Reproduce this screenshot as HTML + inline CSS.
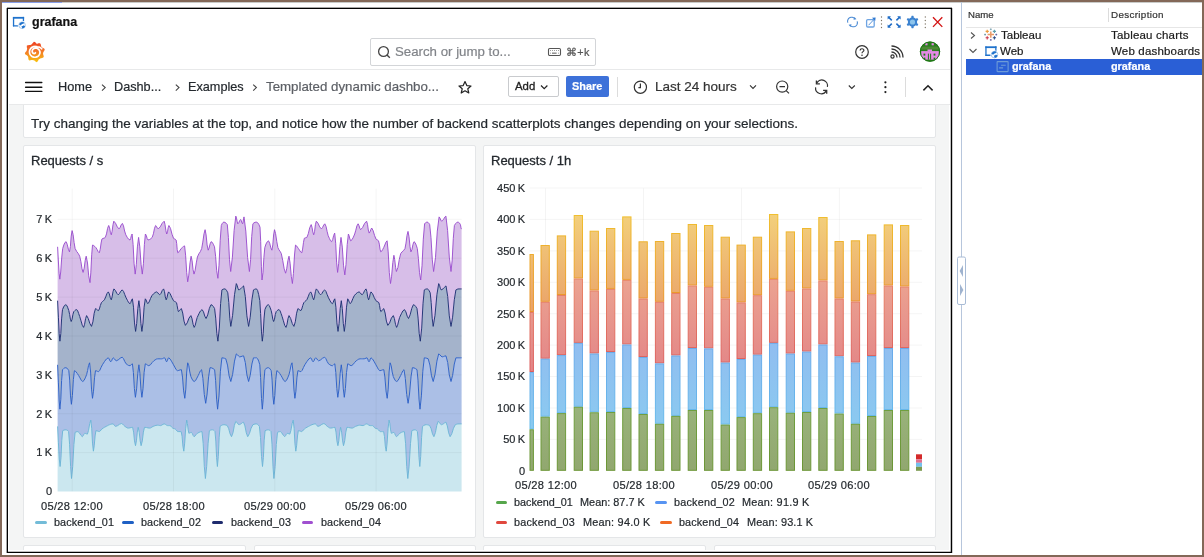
<!DOCTYPE html>
<html><head><meta charset="utf-8"><style>
html,body{margin:0;padding:0;width:1204px;height:557px;overflow:hidden;background:#fff;position:relative}
.t{position:absolute;white-space:nowrap;line-height:1;font-family:"Liberation Sans", sans-serif;will-change:transform;-webkit-text-stroke:0.2px currentColor}
div{font-family:"Liberation Sans", sans-serif}
</style></head><body>
<div style="position:absolute;left:0px;top:0px;width:1204px;height:557px;box-sizing:border-box;border:2px solid #836858;border-bottom-width:2px"></div><div style="position:absolute;left:2px;top:2px;width:1200px;height:1px;background:#c9cbc9"></div><div style="position:absolute;left:2px;top:2px;width:60px;height:1px;background:#8aa0e8"></div><div style="position:absolute;left:7px;top:8px;width:945px;height:545px;box-sizing:border-box;border:1px solid #000"></div><div style="position:absolute;left:6px;top:8px;width:1px;height:545px;background:rgba(0,0,0,0.35)"></div><div style="position:absolute;left:7px;top:7px;width:945px;height:1px;background:rgba(0,0,0,0.35)"></div><div style="position:absolute;left:952px;top:8px;width:1px;height:545px;background:rgba(0,0,0,0.2)"></div><div style="position:absolute;left:950px;top:9px;width:1px;height:543px;background:rgba(0,0,0,0.25)"></div><div style="position:absolute;left:8px;top:551px;width:943px;height:1px;background:rgba(0,0,0,0.25)"></div><svg style="position:absolute;left:12px;top:16px" width="16" height="14" viewBox="0 0 16 14">
<g fill="#1f72cc">
<rect x="0.9" y="0.9" width="11.2" height="1.8"/>
<rect x="0.9" y="0.9" width="1.3" height="9.6" rx="0.4"/>
<rect x="0.9" y="9.2" width="6.2" height="1.3" rx="0.4"/>
<rect x="10.8" y="0.9" width="1.3" height="4.6"/>
</g>
<circle cx="10.1" cy="9.2" r="4.2" fill="#fff"/>
<circle cx="10.1" cy="9.2" r="3.3" fill="none" stroke="#9cc2ea" stroke-width="0.9"/>
<path d="M7.1 8.6 A3.3 3.3 0 0 1 12.3 6.6 L11.2 7.9 Q9.8 7.6 8.8 9.4 Z" fill="#1f72cc"/>
<path d="M9.4 10.1 Q10.8 10.4 11.6 9.2 L13.2 10.3 A3.3 3.3 0 0 1 10.4 12.5 Z" fill="#1f72cc"/>
</svg><div class="t" style="left:32.20px;top:15.92px;font-size:12.5px;font-weight:700;color:#111;">grafana</div><svg style="position:absolute;left:846px;top:15px" width="100" height="15" viewBox="0 0 100 15"><path d="M1.84 7.57 L1.66 6.89 L1.60 6.20 L1.66 5.51 L1.84 4.83 L2.14 4.20 L2.54 3.63 L3.03 3.14 L3.60 2.74 L4.23 2.44 L4.91 2.26 L5.60 2.20 L6.29 2.26 L6.97 2.44 L7.60 2.74 L8.17 3.14 L8.66 3.63" fill="none" stroke="#4a8ad4" stroke-width="1.1"/><path d="M11.16 6.43 L11.34 7.11 L11.40 7.80 L11.34 8.49 L11.16 9.17 L10.86 9.80 L10.46 10.37 L9.97 10.86 L9.40 11.26 L8.77 11.56 L8.09 11.74 L7.40 11.80 L6.71 11.74 L6.03 11.56 L5.40 11.26 L4.83 10.86 L4.34 10.37" fill="none" stroke="#4a8ad4" stroke-width="1.1"/><path d="M8.46 2.03 L10.46 4.23 L7.46 4.83 Z" fill="#4a8ad4"/><path d="M4.54 11.97 L2.54 9.77 L5.54 9.17 Z" fill="#4a8ad4"/><rect x="20.6" y="4.6" width="7.6" height="7.4" rx="1.2" fill="none" stroke="#6ea4e2" stroke-width="1.3"/><path d="M22.6 10.2 L28.2 4.2" stroke="#5b96dc" stroke-width="1"/><path d="M29.6 2.4 L29.2 6.0 L26.0 2.8 Z" fill="#2f78d0"/><circle cx="35.5" cy="2.0" r="0.65" fill="#7d7464"/><circle cx="79.3" cy="2.0" r="0.65" fill="#7d7464"/><circle cx="35.5" cy="5.5" r="0.65" fill="#7d7464"/><circle cx="79.3" cy="5.5" r="0.65" fill="#7d7464"/><circle cx="35.5" cy="9.0" r="0.65" fill="#7d7464"/><circle cx="79.3" cy="9.0" r="0.65" fill="#7d7464"/><circle cx="35.5" cy="12.5" r="0.65" fill="#7d7464"/><circle cx="79.3" cy="12.5" r="0.65" fill="#7d7464"/><path d="M42.80 2.40 L45.80 5.40" stroke="#1f6cc6" stroke-width="1.5"/><path d="M41.60 1.20 L45.00 1.20 L41.60 4.60 Z" fill="#1f6cc6"/><path d="M53.40 2.40 L50.40 5.40" stroke="#1f6cc6" stroke-width="1.5"/><path d="M54.60 1.20 L51.20 1.20 L54.60 4.60 Z" fill="#1f6cc6"/><path d="M42.80 11.60 L45.80 8.60" stroke="#1f6cc6" stroke-width="1.5"/><path d="M41.60 12.80 L45.00 12.80 L41.60 9.40 Z" fill="#1f6cc6"/><path d="M53.40 11.60 L50.40 8.60" stroke="#1f6cc6" stroke-width="1.5"/><path d="M54.60 12.80 L51.20 12.80 L54.60 9.40 Z" fill="#1f6cc6"/><path d="M71.10 7.00 L71.08 7.40 L71.03 7.80 L70.94 8.19 L72.33 9.12 L72.12 9.62 L71.87 10.10 L71.58 10.56 L71.25 10.99 L69.75 10.25 L69.46 10.52 L69.14 10.77 L68.80 10.98 L68.44 11.17 L68.07 11.32 L67.69 11.44 L67.58 13.11 L67.04 13.18 L66.50 13.20 L65.96 13.18 L65.42 13.11 L65.31 11.44 L64.93 11.32 L64.56 11.17 L64.20 10.98 L63.86 10.77 L63.54 10.52 L63.25 10.25 L61.75 10.99 L61.42 10.56 L61.13 10.10 L60.88 9.62 L60.67 9.12 L62.06 8.19 L61.97 7.80 L61.92 7.40 L61.90 7.00 L61.92 6.60 L61.97 6.20 L62.06 5.81 L60.67 4.88 L60.88 4.38 L61.13 3.90 L61.42 3.44 L61.75 3.01 L63.25 3.75 L63.54 3.48 L63.86 3.23 L64.20 3.02 L64.56 2.83 L64.93 2.68 L65.31 2.56 L65.42 0.89 L65.96 0.82 L66.50 0.80 L67.04 0.82 L67.58 0.89 L67.69 2.56 L68.07 2.68 L68.44 2.83 L68.80 3.02 L69.14 3.23 L69.46 3.48 L69.75 3.75 L71.25 3.01 L71.58 3.44 L71.87 3.90 L72.12 4.38 L72.33 4.88 L70.94 5.81 L71.03 6.20 L71.08 6.60Z" fill="#3b82d0"/><circle cx="66.5" cy="7.0" r="2.6" fill="#8cc4ec"/><path d="M87 2.3 L96.3 11.9 M96.3 2.3 L87 11.9" stroke="#d31515" stroke-width="1.35"/></svg><svg style="position:absolute;left:22px;top:39px" width="25" height="25" viewBox="0 0 25 25">
<defs><linearGradient id="lg" gradientUnits="userSpaceOnUse" x1="0" y1="2" x2="0" y2="23"><stop offset="0" stop-color="#ee3a22"/><stop offset="0.5" stop-color="#f37a28"/><stop offset="1" stop-color="#f9c20e"/></linearGradient></defs>
<path fill="url(#lg)" d="M21.45 13.00 L22.10 12.09 L22.65 11.06 L22.63 10.05 L21.65 9.37 L20.64 8.86 L19.80 8.39 L19.32 7.73 L19.03 6.87 L18.84 5.76 L18.49 4.64 L17.64 4.14 L16.48 4.36 L15.41 4.72 L14.56 4.65 L13.80 3.83 L12.90 3.09 L11.90 2.85 L11.05 3.68 L10.34 4.57 L9.72 5.33 L8.99 5.68 L8.29 6.10 L7.21 6.07 L6.07 6.17 L4.90 6.43 L4.79 7.58 L4.91 8.73 L5.17 9.80 L4.96 10.59 L4.76 11.38 L4.35 12.16 L3.61 13.00 L2.96 13.98 L2.97 14.97 L3.88 15.74 L4.83 16.34 L5.58 16.91 L6.00 17.61 L6.26 18.45 L6.33 19.57 L6.57 20.72 L7.28 21.42 L8.46 21.31 L9.56 21.07 L10.49 20.94 L11.28 21.14 L12.08 21.31 L12.90 22.04 L13.85 22.69 L14.92 23.17 L15.71 22.26 L16.34 21.30 L16.81 20.32 L17.51 19.90 L18.17 19.42 L19.03 19.13 L20.14 18.94 L21.26 18.59 L21.76 17.74 L21.54 16.58 L21.18 15.51 L21.04 14.62 L21.16 13.81Z"/>
<path d="M19.79 9.79 L18.94 9.08 L18.03 8.54 L17.10 8.17 L16.17 7.97 L15.27 7.92 L14.53 7.66 L13.77 7.50 L13.00 7.44 L12.22 7.50 L11.47 7.66 L10.74 7.92 L10.07 8.28 L9.45 8.73 L8.90 9.27 L8.43 9.87 L8.05 10.53 L7.76 11.23 L7.58 11.97 L7.50 12.72 L7.53 13.47 L7.66 14.21 L7.89 14.92 L8.22 15.59 L8.64 16.21 L9.14 16.76 L9.70 17.24 L10.33 17.63 L11.01 17.93 L11.71 18.13 L12.44 18.24 L13.17 18.23 L13.90 18.13 L14.60 17.93 L15.26 17.63 L15.87 17.25 L16.43 16.78 L16.91 16.25 L17.31 15.65 L17.62 15.00 L17.84 14.32 L17.97 13.62 L17.92 12.91 L17.75 12.23 L17.49 11.60 L17.15 11.02 L16.75 10.50 L16.28 10.06 L15.77 9.70 L15.22 9.43 L14.65 9.24 L14.08 9.13 L13.52 9.11 L12.97 9.17 L12.45 9.31 L11.97 9.51 L11.53 9.78 L11.15 10.09 L10.83 10.45 L10.58 10.83 L10.39 11.24 L10.26 11.66 L10.20 12.07 L10.21 12.48 L10.27 12.86 L10.38 13.22 L10.54 13.54 L10.74 13.83 L10.98 14.07 L11.23 14.26 L11.50 14.40 L11.77 14.50 L12.04 14.55 L12.31 14.55 L12.55 14.51 L12.77 14.44 L12.97 14.33 L13.13 14.20 L13.26 14.06 L13.36 13.90 L13.42 13.74" fill="none" stroke="#fff" stroke-width="1.7" stroke-linecap="round"/>
</svg><div style="position:absolute;left:370px;top:38px;width:226px;height:28px;box-sizing:border-box;border:1px solid #d3d5d8;border-radius:2px;background:#fff"></div><svg style="position:absolute;left:377px;top:45px" width="15" height="14" viewBox="0 0 15 14">
<circle cx="6.5" cy="6.5" r="4.9" fill="none" stroke="#444" stroke-width="1.3"/><path d="M10 10 L12.8 12.8" stroke="#444" stroke-width="1.4"/></svg><div class="t" style="left:395.00px;top:45.28px;font-size:13.25px;font-weight:400;color:#818489;">Search or jump to...</div><svg style="position:absolute;left:547px;top:47px" width="16" height="10" viewBox="0 0 16 10">
<rect x="1.5" y="1.5" width="12" height="7" rx="1.2" fill="none" stroke="#555" stroke-width="1.1"/>
<g fill="#888"><rect x="3" y="3" width="0.9" height="0.9"/><rect x="5" y="3" width="0.9" height="0.9"/><rect x="7" y="3" width="0.9" height="0.9"/><rect x="9" y="3" width="0.9" height="0.9"/><rect x="11" y="3" width="0.9" height="0.9"/><rect x="3" y="5.7" width="0.9" height="0.9"/><rect x="11" y="5.7" width="0.9" height="0.9"/><rect x="5" y="5.6" width="4.6" height="1.1" fill="#666"/></g></svg><div class="t" style="left:565.60px;top:47.36px;font-size:10.8px;font-weight:400;color:#555;letter-spacing:0.3px">&#8984;+k</div><svg style="position:absolute;left:854px;top:44px" width="16" height="16" viewBox="0 0 16 16">
<circle cx="8" cy="8" r="6.3" fill="none" stroke="#333" stroke-width="1.2"/>
<path d="M6.1 6.4 C6.1 4.2 9.9 4.2 9.9 6.3 C9.9 7.6 8 7.7 8 9.2" fill="none" stroke="#333" stroke-width="1.2"/>
<circle cx="8" cy="11.2" r="0.8" fill="#333"/></svg><svg style="position:absolute;left:889px;top:45px" width="15" height="15" viewBox="0 0 15 15">
<circle cx="3.5" cy="11.5" r="1.6" fill="none" stroke="#333" stroke-width="1.2"/>
<path d="M2.5 7 A5.5 5.5 0 0 1 8 12.5 M2.5 4 A8.5 8.5 0 0 1 11 12.5 M2.5 1 A11.5 11.5 0 0 1 14 12.5" fill="none" stroke="#333" stroke-width="1.3"/></svg><svg style="position:absolute;left:919px;top:41px" width="22" height="22" viewBox="0 0 22 22">
<defs><clipPath id="av"><circle cx="11" cy="10.6" r="10.1"/></clipPath></defs>
<g clip-path="url(#av)">
<rect width="22" height="22" fill="#2c7d20"/>
<rect x="2" y="5.6" width="18" height="2.9" fill="#4d8a35"/>
<rect x="6.3" y="2.2" width="2.2" height="2.1" fill="#e68ae6"/><rect x="12.6" y="2.2" width="2.2" height="2.1" fill="#e68ae6"/>
<rect x="8.5" y="8.5" width="4.5" height="2" fill="#e68ae6"/>
<rect x="2.2" y="10.1" width="17.6" height="8.5" fill="#e68ae6"/>
<rect x="4.5" y="12.6" width="1.8" height="2" fill="#1f7a18"/><rect x="14.6" y="12.6" width="1.8" height="2" fill="#1f7a18"/>
<rect x="8.9" y="12.6" width="1" height="6" fill="#1f7a18"/><rect x="11.1" y="12.6" width="1" height="6" fill="#1f7a18"/>
<rect x="4.7" y="16.6" width="1.6" height="2" fill="#1f7a18"/><rect x="14.6" y="16.6" width="1.6" height="2" fill="#1f7a18"/>
</g><circle cx="11" cy="10.6" r="9.7" fill="none" stroke="#177510" stroke-width="0.9"/></svg><div style="position:absolute;left:9px;top:69px;width:941px;height:1px;background:#e8e9ea"></div><svg style="position:absolute;left:24px;top:80px" width="20" height="14" viewBox="0 0 20 14">
<g stroke="#111" stroke-width="1.4" stroke-linecap="round"><path d="M1.6 2.5 H17.8 M1.6 7.3 H17.8 M1.6 11.4 H17.8"/></g></svg><div class="t" style="left:58.20px;top:80.71px;font-size:12.75px;font-weight:400;color:#24292e;">Home</div><div class="t" style="left:114.30px;top:80.75px;font-size:12.7px;font-weight:400;color:#24292e;">Dashb...</div><div class="t" style="left:188.00px;top:80.75px;font-size:12.7px;font-weight:400;color:#24292e;">Examples</div><div class="t" style="left:266.20px;top:80.24px;font-size:13.3px;font-weight:400;color:#5d6066;">Templated dynamic dashbo...</div><div style="position:absolute;left:508px;top:76px;width:51px;height:21px;box-sizing:border-box;border:1px solid #c9cbce;border-radius:2px;background:#fff"></div><svg style="position:absolute;left:0;top:0" width="960" height="110"><path d="M102 84.6 L105.2 87.6 L102 90.6" fill="none" stroke="#444" stroke-width="1.1"/><path d="M175.8 84.6 L179.0 87.6 L175.8 90.6" fill="none" stroke="#444" stroke-width="1.1"/><path d="M253.2 84.6 L256.4 87.6 L253.2 90.6" fill="none" stroke="#444" stroke-width="1.1"/><path d="M465 81.6 L466.8 85.6 L471 86 L467.8 88.8 L468.8 93 L465 90.8 L461.2 93 L462.2 88.8 L459 86 L463.2 85.6 Z" fill="none" stroke="#222" stroke-width="1.2" stroke-linejoin="round"/><path d="M541 85.5 L544.2 88.6 L547.4 85.5" fill="none" stroke="#222" stroke-width="1.2"/><circle cx="640.4" cy="87.2" r="6.1" fill="none" stroke="#333" stroke-width="1.2"/><path d="M640.4 83.6 V87.6 H638.4" fill="none" stroke="#333" stroke-width="1.2"/><path d="M750 85.4 L753 88.4 L756 85.4" fill="none" stroke="#333" stroke-width="1.1"/><circle cx="782.2" cy="86.6" r="5.6" fill="none" stroke="#333" stroke-width="1.2"/><path d="M779.5 86.6 H785 M786.4 90.8 L789 93.4" fill="none" stroke="#333" stroke-width="1.2"/><path d="M816.8 83.0 A5.7 5.7 0 0 1 827.4 86.9 M815.6 87.4 A5.7 5.7 0 0 0 826.2 90.9" fill="none" stroke="#333" stroke-width="1.2"/><path d="M816.4 80.4 V83.9 H819.9" fill="none" stroke="#333" stroke-width="1.3"/><path d="M823.1 90.3 H826.7 V93.8" fill="none" stroke="#333" stroke-width="1.3"/><path d="M848.8 85.5 L851.8 88.5 L854.8 85.5" fill="none" stroke="#333" stroke-width="1.1"/><circle cx="885.4" cy="82.3" r="1.1" fill="#222"/><circle cx="885.4" cy="87.2" r="1.1" fill="#222"/><circle cx="885.4" cy="92.1" r="1.1" fill="#222"/><path d="M923.4 90.4 L928 85.8 L932.6 90.4" fill="none" stroke="#222" stroke-width="1.5"/></svg><div class="t" style="left:515.20px;top:80.85px;font-size:11.4px;font-weight:500;color:#222;-webkit-text-stroke:0.3px #222">Add</div><div style="position:absolute;left:566px;top:76px;width:43px;height:21px;border-radius:2px;background:#3d71d9"></div><div class="t" style="left:572.20px;top:81.27px;font-size:10.9px;font-weight:700;color:#fff;">Share</div><div style="position:absolute;left:617px;top:77px;width:1px;height:20px;background:#dcdcdc"></div><div style="position:absolute;left:905px;top:77px;width:1px;height:20px;background:#dcdcdc"></div><div class="t" style="left:655.30px;top:80.07px;font-size:13.5px;font-weight:400;color:#333;">Last 24 hours</div><div style="position:absolute;left:9px;top:104px;width:941px;height:1px;background:#e8e9ea"></div><div style="position:absolute;left:9px;top:105px;width:940px;height:445px;background:#f4f5f5;overflow:hidden"><div style="position:absolute;left:14px;top:-7px;width:913px;height:40px;box-sizing:border-box;border:1px solid #e4e6e8;border-radius:2px;background:#fff"></div><div class="t" style="left:22.20px;top:12.09px;font-size:13.48px;font-weight:400;color:#24292e;">Try changing the variables at the top, and notice how the number of backend scatterplots changes depending on your selections.</div><div style="position:absolute;left:14px;top:40px;width:453px;height:393px;box-sizing:border-box;border:1px solid #e4e6e8;border-radius:2px;background:#fff"></div><div style="position:absolute;left:474px;top:40px;width:453px;height:393px;box-sizing:border-box;border:1px solid #e4e6e8;border-radius:2px;background:#fff"></div><div style="position:absolute;left:14px;top:440px;width:223px;height:40px;box-sizing:border-box;border:1px solid #e4e6e8;border-radius:2px;background:#fff"></div><div style="position:absolute;left:245px;top:440px;width:222px;height:40px;box-sizing:border-box;border:1px solid #e4e6e8;border-radius:2px;background:#fff"></div><div style="position:absolute;left:474px;top:440px;width:223px;height:40px;box-sizing:border-box;border:1px solid #e4e6e8;border-radius:2px;background:#fff"></div><div style="position:absolute;left:705px;top:440px;width:222px;height:40px;box-sizing:border-box;border:1px solid #e4e6e8;border-radius:2px;background:#fff"></div></div><div class="t" style="left:31.20px;top:153.50px;font-size:13.0px;font-weight:500;color:#24292e;-webkit-text-stroke:0.3px #24292e">Requests / s</div><div class="t" style="left:491.20px;top:153.50px;font-size:13.0px;font-weight:500;color:#24292e;-webkit-text-stroke:0.3px #24292e">Requests / 1h</div><svg style="position:absolute;left:0;top:0" width="960" height="557"><defs><linearGradient id="gO" gradientUnits="userSpaceOnUse" x1="0" y1="188" x2="0" y2="330"><stop offset="0" stop-color="#f5dc80"/><stop offset="1" stop-color="#e89a66"/></linearGradient><linearGradient id="gOs" gradientUnits="userSpaceOnUse" x1="0" y1="188" x2="0" y2="330"><stop offset="0" stop-color="#f2cc30"/><stop offset="1" stop-color="#e8882a"/></linearGradient><linearGradient id="gR" gradientUnits="userSpaceOnUse" x1="0" y1="270" x2="0" y2="380"><stop offset="0" stop-color="#eca692"/><stop offset="1" stop-color="#e28286"/></linearGradient><linearGradient id="gRs" gradientUnits="userSpaceOnUse" x1="0" y1="270" x2="0" y2="380"><stop offset="0" stop-color="#ea8a68"/><stop offset="1" stop-color="#da5a5e"/></linearGradient><linearGradient id="gB" gradientUnits="userSpaceOnUse" x1="0" y1="340" x2="0" y2="430"><stop offset="0" stop-color="#91bdf0"/><stop offset="1" stop-color="#8acaf0"/></linearGradient><linearGradient id="gBs" gradientUnits="userSpaceOnUse" x1="0" y1="340" x2="0" y2="430"><stop offset="0" stop-color="#6aa8ea"/><stop offset="1" stop-color="#68bcea"/></linearGradient><linearGradient id="gG" gradientUnits="userSpaceOnUse" x1="0" y1="405" x2="0" y2="471"><stop offset="0" stop-color="#99b37b"/><stop offset="1" stop-color="#91a76f"/></linearGradient><linearGradient id="gGs" gradientUnits="userSpaceOnUse" x1="0" y1="405" x2="0" y2="471"><stop offset="0" stop-color="#70a040"/><stop offset="1" stop-color="#6c9636"/></linearGradient></defs><path d="M57.6,426.4 58.4,442.8 59.3,459.1 60.1,466.5 61.0,457.3 61.8,440.2 62.7,430.7 63.8,430.2 64.9,429.9 66.1,429.8 66.9,430.1 67.8,430.6 68.6,431.6 69.6,444.3 70.6,466.6 71.5,478.5 72.7,466.7 73.9,444.6 75.1,432.4 76.1,431.9 77.1,431.7 78.0,431.6 79.4,432.9 80.9,435.3 82.3,436.7 83.1,435.8 84.0,434.1 84.8,433.3 85.7,433.5 86.6,433.9 87.4,434.1 88.5,430.5 89.7,423.8 90.8,420.1 91.7,428.2 92.5,443.1 93.4,451.2 94.2,445.9 95.1,436.0 95.9,430.7 97.1,430.9 98.2,431.3 99.3,431.6 100.2,431.0 101.1,429.9 101.9,429.0 103.3,428.0 104.7,427.2 106.2,426.4 107.3,425.8 108.4,425.2 109.6,424.7 110.7,424.3 111.9,424.0 113.0,423.9 113.8,424.5 114.7,425.8 115.5,426.4 117.5,425.7 119.5,424.3 121.5,423.5 122.7,424.1 123.8,425.4 124.9,426.4 126.1,427.2 127.2,427.9 128.3,428.1 129.8,427.9 131.2,427.5 132.6,427.3 133.6,432.1 134.5,440.9 135.5,445.7 136.4,440.9 137.3,432.1 138.2,427.3 139.2,432.1 140.2,440.9 141.1,445.7 142.3,440.9 143.4,432.1 144.5,427.3 146.3,427.5 148.0,427.9 149.7,428.1 150.8,427.8 151.9,427.1 153.1,426.4 154.5,425.9 155.9,425.4 157.3,425.2 158.5,425.3 159.6,425.5 160.7,425.6 161.9,425.1 163.0,424.3 164.2,423.9 165.3,424.3 166.4,425.1 167.6,425.6 168.4,425.6 169.3,425.6 170.1,425.6 171.0,426.2 171.8,427.3 172.7,428.1 173.5,428.5 174.4,428.7 175.2,429.0 176.1,429.8 177.0,431.0 177.8,431.6 178.9,431.6 180.1,431.6 181.2,431.6 182.1,436.6 182.9,446.1 183.8,451.2 184.7,443.1 185.7,428.2 186.7,420.1 187.4,423.5 188.2,429.9 188.9,433.3 189.7,433.0 190.6,432.6 191.4,432.4 192.3,433.5 193.2,435.6 194.0,436.7 195.1,435.9 196.3,434.4 197.4,433.3 199.0,432.4 200.5,431.8 202.0,431.6 203.2,443.7 204.3,466.3 205.4,478.5 206.7,466.2 208.1,443.4 209.4,430.7 210.5,430.2 211.6,429.9 212.8,429.8 213.5,430.1 214.2,430.6 215.0,431.6 215.8,441.1 216.6,457.7 217.4,466.5 218.3,456.3 219.2,437.2 220.1,426.4 221.4,425.5 222.6,424.9 223.9,424.7 225.0,424.8 226.1,425.1 227.3,425.6 228.7,428.7 230.1,433.9 231.5,436.7 233.0,432.7 234.4,425.3 235.8,421.3 236.8,422.2 237.8,423.8 238.9,424.7 239.5,424.6 240.2,424.3 240.9,423.9 241.8,423.2 242.6,422.5 243.5,422.2 244.9,425.9 246.3,432.9 247.7,436.7 249.4,433.7 251.1,428.2 252.9,424.7 254.0,424.3 255.1,424.0 256.3,423.9 257.3,424.2 258.4,425.1 259.4,426.4 260.5,437.5 261.5,456.5 262.5,466.5 263.4,457.3 264.2,440.2 265.1,430.7 266.2,430.2 267.3,429.9 268.5,429.8 269.3,430.1 270.2,430.6 271.0,431.6 272.0,444.3 273.0,466.6 273.9,478.5 275.1,466.7 276.3,444.6 277.5,432.4 278.5,431.9 279.5,431.7 280.4,431.6 281.8,432.9 283.3,435.3 284.7,436.7 285.5,435.8 286.4,434.1 287.2,433.3 288.1,433.5 289.0,433.9 289.8,434.1 290.9,430.5 292.1,423.8 293.2,420.1 294.1,428.2 294.9,443.1 295.8,451.2 296.6,445.9 297.5,436.0 298.3,430.7 299.5,430.9 300.6,431.3 301.7,431.6 302.6,431.0 303.5,429.9 304.3,429.0 305.7,428.0 307.1,427.2 308.6,426.4 309.7,425.8 310.8,425.2 312.0,424.7 313.1,424.3 314.3,424.0 315.4,423.9 316.2,424.5 317.1,425.8 317.9,426.4 319.9,425.7 321.9,424.3 323.9,423.5 325.1,424.1 326.2,425.4 327.3,426.4 328.5,427.2 329.6,427.9 330.7,428.1 332.2,427.9 333.6,427.5 335.0,427.3 336.0,432.1 336.9,440.9 337.9,445.7 338.8,440.9 339.7,432.1 340.6,427.3 341.6,432.1 342.6,440.9 343.5,445.7 344.7,440.9 345.8,432.1 346.9,427.3 348.7,427.5 350.4,427.9 352.1,428.1 353.2,427.8 354.3,427.1 355.5,426.4 356.9,425.9 358.3,425.4 359.7,425.2 360.9,425.3 362.0,425.5 363.1,425.6 364.3,425.1 365.4,424.3 366.6,423.9 367.7,424.3 368.8,425.1 370.0,425.6 370.8,425.6 371.7,425.6 372.5,425.6 373.4,426.2 374.2,427.3 375.1,428.1 375.9,428.5 376.8,428.7 377.6,429.0 378.5,429.8 379.4,431.0 380.2,431.6 381.3,431.6 382.5,431.6 383.6,431.6 384.5,436.6 385.3,446.1 386.2,451.2 387.1,443.1 388.1,428.2 389.1,420.1 389.8,423.5 390.6,429.9 391.3,433.3 392.1,433.0 393.0,432.6 393.8,432.4 394.7,433.5 395.6,435.6 396.4,436.7 397.5,435.9 398.7,434.4 399.8,433.3 401.4,432.4 402.9,431.8 404.4,431.6 405.6,443.7 406.7,466.3 407.8,478.5 409.1,466.2 410.5,443.4 411.8,430.7 412.9,430.2 414.0,429.9 415.2,429.8 415.9,430.1 416.6,430.6 417.4,431.6 418.2,441.1 419.0,457.7 419.8,466.5 420.7,456.3 421.6,437.2 422.5,426.4 423.8,425.5 425.0,424.9 426.3,424.7 427.4,424.8 428.5,425.1 429.7,425.6 431.1,428.7 432.5,433.9 433.9,436.7 435.4,432.7 436.8,425.3 438.2,421.3 439.2,422.2 440.2,423.8 441.3,424.7 441.9,424.6 442.6,424.3 443.3,423.9 444.2,423.2 445.0,422.5 445.9,422.2 447.3,425.9 448.7,432.9 450.1,436.7 451.8,433.7 453.5,428.2 455.3,424.7 456.4,424.3 457.5,424.0 458.7,423.9 459.6,423.9 460.6,423.9 461.6,423.9 461.6,491.5 57.6,491.5Z" fill="#cbe7ef"/><path d="M57.6,364.8 58.4,382.9 59.2,401.0 59.9,409.2 60.8,399.2 61.6,380.4 62.5,369.7 63.6,368.6 64.7,367.9 65.9,367.7 66.9,368.1 67.8,369.1 68.8,370.7 69.7,380.1 70.5,395.9 71.4,404.3 72.4,395.5 73.4,379.4 74.4,370.7 75.8,371.5 77.3,373.5 78.7,375.6 80.0,377.9 81.3,380.4 82.7,381.5 84.0,380.5 85.3,377.9 86.6,374.6 87.6,370.5 88.6,365.3 89.6,362.8 90.6,372.0 91.5,389.1 92.5,398.3 93.5,391.2 94.5,377.8 95.5,370.7 96.5,370.9 97.5,371.4 98.5,371.7 99.8,370.3 101.1,367.4 102.4,364.8 104.4,361.7 106.4,359.0 108.3,357.8 109.1,358.9 109.9,360.8 110.7,361.8 111.6,360.8 112.4,358.9 113.3,357.8 114.3,358.6 115.2,360.0 116.2,360.8 118.2,359.9 120.2,358.2 122.2,357.2 123.5,358.7 124.8,361.6 126.1,363.8 127.4,364.7 128.7,365.5 130.1,365.7 130.8,365.2 131.6,364.3 132.4,363.8 133.4,372.5 134.4,388.6 135.4,397.3 136.6,388.9 137.8,373.2 138.9,364.8 139.9,373.2 140.9,388.9 141.9,397.3 143.0,388.6 144.1,372.5 145.3,363.8 146.4,364.3 147.6,365.2 148.8,365.7 150.5,364.7 152.1,362.6 153.8,360.8 155.1,359.9 156.4,359.1 157.7,358.8 159.0,358.8 160.3,358.8 161.7,358.8 162.6,358.6 163.6,358.1 164.6,357.8 165.3,358.9 165.9,360.8 166.6,361.8 167.3,360.8 167.9,358.9 168.6,357.8 170.2,359.1 171.9,361.9 173.5,364.8 174.8,367.1 176.1,369.6 177.5,370.7 178.8,370.4 180.1,369.9 181.4,369.7 182.5,377.1 183.6,390.9 184.8,398.3 185.8,389.1 186.7,372.0 187.7,362.8 188.8,365.8 189.8,372.0 190.9,376.6 192.0,379.0 193.1,380.8 194.2,381.5 195.6,380.5 196.9,378.1 198.2,375.6 199.3,373.3 200.4,370.8 201.6,369.7 202.9,378.4 204.3,394.6 205.7,403.3 207.1,394.0 208.6,376.9 210.0,367.7 211.6,367.9 213.1,368.6 214.6,369.7 215.6,380.3 216.6,399.1 217.6,409.2 219.0,395.9 220.4,371.2 221.9,357.8 223.2,358.0 224.5,358.3 225.8,358.8 227.5,365.1 229.1,375.8 230.8,381.5 232.6,374.4 234.5,361.1 236.3,353.9 237.4,354.7 238.6,356.1 239.7,356.9 241.0,356.6 242.3,356.1 243.6,355.9 245.3,362.5 246.9,374.9 248.6,381.5 250.2,375.4 251.9,364.0 253.5,357.8 254.5,357.8 255.5,357.8 256.5,357.8 257.6,358.7 258.7,361.1 259.8,364.8 260.6,377.7 261.5,398.4 262.3,409.2 263.2,399.2 264.0,380.4 264.9,369.7 266.0,368.6 267.1,367.9 268.3,367.7 269.3,368.1 270.2,369.1 271.2,370.7 272.1,380.1 272.9,395.9 273.8,404.3 274.8,395.5 275.8,379.4 276.8,370.7 278.2,371.5 279.7,373.5 281.1,375.6 282.4,377.9 283.7,380.4 285.1,381.5 286.4,380.5 287.7,377.9 289.0,374.6 290.0,370.5 291.0,365.3 292.0,362.8 293.0,372.0 293.9,389.1 294.9,398.3 295.9,391.2 296.9,377.8 297.9,370.7 298.9,370.9 299.9,371.4 300.9,371.7 302.2,370.3 303.5,367.4 304.8,364.8 306.8,361.7 308.8,359.0 310.7,357.8 311.5,358.9 312.3,360.8 313.1,361.8 314.0,360.8 314.8,358.9 315.7,357.8 316.7,358.6 317.6,360.0 318.6,360.8 320.6,359.9 322.6,358.2 324.6,357.2 325.9,358.7 327.2,361.6 328.5,363.8 329.8,364.7 331.1,365.5 332.5,365.7 333.2,365.2 334.0,364.3 334.8,363.8 335.8,372.5 336.8,388.6 337.8,397.3 339.0,388.9 340.2,373.2 341.3,364.8 342.3,373.2 343.3,388.9 344.3,397.3 345.4,388.6 346.5,372.5 347.7,363.8 348.8,364.3 350.0,365.2 351.2,365.7 352.9,364.7 354.5,362.6 356.2,360.8 357.5,359.9 358.8,359.1 360.1,358.8 361.4,358.8 362.7,358.8 364.1,358.8 365.0,358.6 366.0,358.1 367.0,357.8 367.7,358.9 368.3,360.8 369.0,361.8 369.7,360.8 370.3,358.9 371.0,357.8 372.6,359.1 374.3,361.9 375.9,364.8 377.2,367.1 378.5,369.6 379.9,370.7 381.2,370.4 382.5,369.9 383.8,369.7 384.9,377.1 386.0,390.9 387.2,398.3 388.2,389.1 389.1,372.0 390.1,362.8 391.2,365.8 392.2,372.0 393.3,376.6 394.4,379.0 395.5,380.8 396.6,381.5 398.0,380.5 399.3,378.1 400.6,375.6 401.7,373.3 402.8,370.8 404.0,369.7 405.3,378.4 406.7,394.6 408.1,403.3 409.5,394.0 411.0,376.9 412.4,367.7 414.0,367.9 415.5,368.6 417.0,369.7 418.0,380.3 419.0,399.1 420.0,409.2 421.4,395.9 422.8,371.2 424.3,357.8 425.6,358.0 426.9,358.3 428.2,358.8 429.9,365.1 431.5,375.8 433.2,381.5 435.0,374.4 436.9,361.1 438.7,353.9 439.8,354.7 441.0,356.1 442.1,356.9 443.4,356.6 444.7,356.1 446.0,355.9 447.7,362.5 449.3,374.9 451.0,381.5 452.6,375.4 454.3,364.0 455.9,357.8 456.9,357.8 457.9,357.8 458.9,357.8 459.8,357.8 460.7,357.8 461.6,357.8 461.6,423.9 460.6,423.9 459.6,423.9 458.7,423.9 457.5,424.0 456.4,424.3 455.3,424.7 453.5,428.2 451.8,433.7 450.1,436.7 448.7,432.9 447.3,425.9 445.9,422.2 445.0,422.5 444.2,423.2 443.3,423.9 442.6,424.3 441.9,424.6 441.3,424.7 440.2,423.8 439.2,422.2 438.2,421.3 436.8,425.3 435.4,432.7 433.9,436.7 432.5,433.9 431.1,428.7 429.7,425.6 428.5,425.1 427.4,424.8 426.3,424.7 425.0,424.9 423.8,425.5 422.5,426.4 421.6,437.2 420.7,456.3 419.8,466.5 419.0,457.7 418.2,441.1 417.4,431.6 416.6,430.6 415.9,430.1 415.2,429.8 414.0,429.9 412.9,430.2 411.8,430.7 410.5,443.4 409.1,466.2 407.8,478.5 406.7,466.3 405.6,443.7 404.4,431.6 402.9,431.8 401.4,432.4 399.8,433.3 398.7,434.4 397.5,435.9 396.4,436.7 395.6,435.6 394.7,433.5 393.8,432.4 393.0,432.6 392.1,433.0 391.3,433.3 390.6,429.9 389.8,423.5 389.1,420.1 388.1,428.2 387.1,443.1 386.2,451.2 385.3,446.1 384.5,436.6 383.6,431.6 382.5,431.6 381.3,431.6 380.2,431.6 379.4,431.0 378.5,429.8 377.6,429.0 376.8,428.7 375.9,428.5 375.1,428.1 374.2,427.3 373.4,426.2 372.5,425.6 371.7,425.6 370.8,425.6 370.0,425.6 368.8,425.1 367.7,424.3 366.6,423.9 365.4,424.3 364.3,425.1 363.1,425.6 362.0,425.5 360.9,425.3 359.7,425.2 358.3,425.4 356.9,425.9 355.5,426.4 354.3,427.1 353.2,427.8 352.1,428.1 350.4,427.9 348.7,427.5 346.9,427.3 345.8,432.1 344.7,440.9 343.5,445.7 342.6,440.9 341.6,432.1 340.6,427.3 339.7,432.1 338.8,440.9 337.9,445.7 336.9,440.9 336.0,432.1 335.0,427.3 333.6,427.5 332.2,427.9 330.7,428.1 329.6,427.9 328.5,427.2 327.3,426.4 326.2,425.4 325.1,424.1 323.9,423.5 321.9,424.3 319.9,425.7 317.9,426.4 317.1,425.8 316.2,424.5 315.4,423.9 314.3,424.0 313.1,424.3 312.0,424.7 310.8,425.2 309.7,425.8 308.6,426.4 307.1,427.2 305.7,428.0 304.3,429.0 303.5,429.9 302.6,431.0 301.7,431.6 300.6,431.3 299.5,430.9 298.3,430.7 297.5,436.0 296.6,445.9 295.8,451.2 294.9,443.1 294.1,428.2 293.2,420.1 292.1,423.8 290.9,430.5 289.8,434.1 289.0,433.9 288.1,433.5 287.2,433.3 286.4,434.1 285.5,435.8 284.7,436.7 283.3,435.3 281.8,432.9 280.4,431.6 279.5,431.7 278.5,431.9 277.5,432.4 276.3,444.6 275.1,466.7 273.9,478.5 273.0,466.6 272.0,444.3 271.0,431.6 270.2,430.6 269.3,430.1 268.5,429.8 267.3,429.9 266.2,430.2 265.1,430.7 264.2,440.2 263.4,457.3 262.5,466.5 261.5,456.5 260.5,437.5 259.4,426.4 258.4,425.1 257.3,424.2 256.3,423.9 255.1,424.0 254.0,424.3 252.9,424.7 251.1,428.2 249.4,433.7 247.7,436.7 246.3,432.9 244.9,425.9 243.5,422.2 242.6,422.5 241.8,423.2 240.9,423.9 240.2,424.3 239.5,424.6 238.9,424.7 237.8,423.8 236.8,422.2 235.8,421.3 234.4,425.3 233.0,432.7 231.5,436.7 230.1,433.9 228.7,428.7 227.3,425.6 226.1,425.1 225.0,424.8 223.9,424.7 222.6,424.9 221.4,425.5 220.1,426.4 219.2,437.2 218.3,456.3 217.4,466.5 216.6,457.7 215.8,441.1 215.0,431.6 214.2,430.6 213.5,430.1 212.8,429.8 211.6,429.9 210.5,430.2 209.4,430.7 208.1,443.4 206.7,466.2 205.4,478.5 204.3,466.3 203.2,443.7 202.0,431.6 200.5,431.8 199.0,432.4 197.4,433.3 196.3,434.4 195.1,435.9 194.0,436.7 193.2,435.6 192.3,433.5 191.4,432.4 190.6,432.6 189.7,433.0 188.9,433.3 188.2,429.9 187.4,423.5 186.7,420.1 185.7,428.2 184.7,443.1 183.8,451.2 182.9,446.1 182.1,436.6 181.2,431.6 180.1,431.6 178.9,431.6 177.8,431.6 177.0,431.0 176.1,429.8 175.2,429.0 174.4,428.7 173.5,428.5 172.7,428.1 171.8,427.3 171.0,426.2 170.1,425.6 169.3,425.6 168.4,425.6 167.6,425.6 166.4,425.1 165.3,424.3 164.2,423.9 163.0,424.3 161.9,425.1 160.7,425.6 159.6,425.5 158.5,425.3 157.3,425.2 155.9,425.4 154.5,425.9 153.1,426.4 151.9,427.1 150.8,427.8 149.7,428.1 148.0,427.9 146.3,427.5 144.5,427.3 143.4,432.1 142.3,440.9 141.1,445.7 140.2,440.9 139.2,432.1 138.2,427.3 137.3,432.1 136.4,440.9 135.5,445.7 134.5,440.9 133.6,432.1 132.6,427.3 131.2,427.5 129.8,427.9 128.3,428.1 127.2,427.9 126.1,427.2 124.9,426.4 123.8,425.4 122.7,424.1 121.5,423.5 119.5,424.3 117.5,425.7 115.5,426.4 114.7,425.8 113.8,424.5 113.0,423.9 111.9,424.0 110.7,424.3 109.6,424.7 108.4,425.2 107.3,425.8 106.2,426.4 104.7,427.2 103.3,428.0 101.9,429.0 101.1,429.9 100.2,431.0 99.3,431.6 98.2,431.3 97.1,430.9 95.9,430.7 95.1,436.0 94.2,445.9 93.4,451.2 92.5,443.1 91.7,428.2 90.8,420.1 89.7,423.8 88.5,430.5 87.4,434.1 86.6,433.9 85.7,433.5 84.8,433.3 84.0,434.1 83.1,435.8 82.3,436.7 80.9,435.3 79.4,432.9 78.0,431.6 77.1,431.7 76.1,431.9 75.1,432.4 73.9,444.6 72.7,466.7 71.5,478.5 70.6,466.6 69.6,444.3 68.6,431.6 67.8,430.6 66.9,430.1 66.1,429.8 64.9,429.9 63.8,430.2 62.7,430.7 61.8,440.2 61.0,457.3 60.1,466.5 59.3,459.1 58.4,442.8 57.6,426.4Z" fill="#abbfe6"/><path d="M57.6,300.7 58.4,317.2 59.2,333.7 59.9,341.2 60.8,333.6 61.6,318.9 62.5,309.6 63.6,307.0 64.7,305.3 65.9,304.7 66.9,305.6 67.8,307.8 68.8,310.6 69.6,314.4 70.4,319.2 71.2,321.5 72.1,319.1 72.9,314.6 73.8,311.6 74.8,310.6 75.7,309.9 76.7,309.6 77.7,310.9 78.7,313.6 79.7,316.5 81.0,320.8 82.3,325.3 83.6,327.4 84.6,324.3 85.6,318.6 86.6,315.6 88.2,318.4 89.9,323.6 91.5,326.4 92.9,321.8 94.2,313.2 95.5,308.6 96.5,309.2 97.5,310.1 98.5,310.6 99.4,308.9 100.4,305.4 101.4,302.7 102.4,301.6 103.4,300.8 104.4,299.8 105.7,296.9 107.0,293.5 108.3,291.9 109.3,293.9 110.3,297.7 111.3,299.8 112.1,296.9 113.0,291.7 113.9,288.9 115.3,290.4 116.8,293.3 118.2,294.8 119.5,293.5 120.8,291.2 122.2,289.9 123.5,291.4 124.8,294.7 126.1,297.8 127.4,300.3 128.7,302.7 130.1,303.7 130.8,302.4 131.6,300.0 132.4,298.8 133.5,307.2 134.5,322.9 135.6,331.4 136.7,323.4 137.8,308.7 138.9,300.7 139.9,308.7 140.9,323.4 141.9,331.4 143.0,322.9 144.1,307.2 145.3,298.8 146.1,300.0 147.0,302.4 147.8,303.7 149.1,302.0 150.5,298.5 151.8,295.8 153.4,293.9 155.1,292.5 156.7,291.9 157.7,292.6 158.7,294.0 159.7,294.8 161.0,293.3 162.3,290.4 163.6,288.9 164.5,291.7 165.3,296.9 166.2,299.8 167.0,297.7 167.8,293.9 168.6,291.9 170.2,293.8 171.9,297.7 173.5,300.7 174.5,301.4 175.5,301.9 176.5,302.7 177.1,305.4 177.8,309.5 178.4,311.6 179.4,310.8 180.4,309.4 181.4,308.6 182.7,313.0 184.0,321.1 185.4,325.4 187.2,322.9 189.0,318.1 190.9,315.6 192.0,318.6 193.1,324.3 194.2,327.4 195.2,325.3 196.2,321.1 197.2,317.5 198.9,313.8 200.5,310.9 202.1,309.6 203.5,311.9 204.8,316.2 206.1,318.5 207.7,314.9 209.4,308.3 211.0,304.7 212.2,305.2 213.4,306.6 214.6,308.6 215.7,318.1 216.8,333.3 217.9,341.2 219.3,328.1 220.6,303.6 221.9,289.9 222.9,289.3 223.9,289.0 224.9,288.9 225.8,289.4 226.8,290.8 227.8,292.8 228.8,302.6 229.8,318.2 230.8,326.4 232.6,315.3 234.5,294.7 236.3,283.6 237.1,285.2 237.9,288.2 238.7,289.9 239.7,289.5 240.7,288.8 241.6,287.9 242.3,287.2 243.0,286.3 243.6,285.9 245.3,296.4 246.9,315.9 248.6,326.4 250.2,317.2 251.9,299.8 253.5,289.9 254.5,289.4 255.5,289.0 256.5,288.9 257.6,290.5 258.7,294.7 259.8,300.7 260.6,313.5 261.5,331.9 262.3,341.2 263.2,333.6 264.0,318.9 264.9,309.6 266.0,307.0 267.1,305.3 268.3,304.7 269.3,305.6 270.2,307.8 271.2,310.6 272.0,314.4 272.8,319.2 273.6,321.5 274.5,319.1 275.3,314.6 276.2,311.6 277.2,310.6 278.1,309.9 279.1,309.6 280.1,310.9 281.1,313.6 282.1,316.5 283.4,320.8 284.7,325.3 286.0,327.4 287.0,324.3 288.0,318.6 289.0,315.6 290.6,318.4 292.3,323.6 293.9,326.4 295.3,321.8 296.6,313.2 297.9,308.6 298.9,309.2 299.9,310.1 300.9,310.6 301.8,308.9 302.8,305.4 303.8,302.7 304.8,301.6 305.8,300.8 306.8,299.8 308.1,296.9 309.4,293.5 310.7,291.9 311.7,293.9 312.7,297.7 313.7,299.8 314.5,296.9 315.4,291.7 316.3,288.9 317.7,290.4 319.2,293.3 320.6,294.8 321.9,293.5 323.2,291.2 324.6,289.9 325.9,291.4 327.2,294.7 328.5,297.8 329.8,300.3 331.1,302.7 332.5,303.7 333.2,302.4 334.0,300.0 334.8,298.8 335.9,307.2 336.9,322.9 338.0,331.4 339.1,323.4 340.2,308.7 341.3,300.7 342.3,308.7 343.3,323.4 344.3,331.4 345.4,322.9 346.5,307.2 347.7,298.8 348.5,300.0 349.4,302.4 350.2,303.7 351.5,302.0 352.9,298.5 354.2,295.8 355.8,293.9 357.5,292.5 359.1,291.9 360.1,292.6 361.1,294.0 362.1,294.8 363.4,293.3 364.7,290.4 366.0,288.9 366.9,291.7 367.7,296.9 368.6,299.8 369.4,297.7 370.2,293.9 371.0,291.9 372.6,293.8 374.3,297.7 375.9,300.7 376.9,301.4 377.9,301.9 378.9,302.7 379.5,305.4 380.2,309.5 380.8,311.6 381.8,310.8 382.8,309.4 383.8,308.6 385.1,313.0 386.4,321.1 387.8,325.4 389.6,322.9 391.4,318.1 393.3,315.6 394.4,318.6 395.5,324.3 396.6,327.4 397.6,325.3 398.6,321.1 399.6,317.5 401.3,313.8 402.9,310.9 404.5,309.6 405.9,311.9 407.2,316.2 408.5,318.5 410.1,314.9 411.8,308.3 413.4,304.7 414.6,305.2 415.8,306.6 417.0,308.6 418.1,318.1 419.2,333.3 420.3,341.2 421.7,328.1 423.0,303.6 424.3,289.9 425.3,289.3 426.3,289.0 427.3,288.9 428.2,289.4 429.2,290.8 430.2,292.8 431.2,302.6 432.2,318.2 433.2,326.4 435.0,315.3 436.9,294.7 438.7,283.6 439.5,285.2 440.3,288.2 441.1,289.9 442.1,289.5 443.1,288.8 444.0,287.9 444.7,287.2 445.4,286.3 446.0,285.9 447.7,296.4 449.3,315.9 451.0,326.4 452.6,317.2 454.3,299.8 455.9,289.9 456.9,289.4 457.9,289.0 458.9,288.9 459.8,288.9 460.7,288.9 461.6,288.9 461.6,357.8 460.7,357.8 459.8,357.8 458.9,357.8 457.9,357.8 456.9,357.8 455.9,357.8 454.3,364.0 452.6,375.4 451.0,381.5 449.3,374.9 447.7,362.5 446.0,355.9 444.7,356.1 443.4,356.6 442.1,356.9 441.0,356.1 439.8,354.7 438.7,353.9 436.9,361.1 435.0,374.4 433.2,381.5 431.5,375.8 429.9,365.1 428.2,358.8 426.9,358.3 425.6,358.0 424.3,357.8 422.8,371.2 421.4,395.9 420.0,409.2 419.0,399.1 418.0,380.3 417.0,369.7 415.5,368.6 414.0,367.9 412.4,367.7 411.0,376.9 409.5,394.0 408.1,403.3 406.7,394.6 405.3,378.4 404.0,369.7 402.8,370.8 401.7,373.3 400.6,375.6 399.3,378.1 398.0,380.5 396.6,381.5 395.5,380.8 394.4,379.0 393.3,376.6 392.2,372.0 391.2,365.8 390.1,362.8 389.1,372.0 388.2,389.1 387.2,398.3 386.0,390.9 384.9,377.1 383.8,369.7 382.5,369.9 381.2,370.4 379.9,370.7 378.5,369.6 377.2,367.1 375.9,364.8 374.3,361.9 372.6,359.1 371.0,357.8 370.3,358.9 369.7,360.8 369.0,361.8 368.3,360.8 367.7,358.9 367.0,357.8 366.0,358.1 365.0,358.6 364.1,358.8 362.7,358.8 361.4,358.8 360.1,358.8 358.8,359.1 357.5,359.9 356.2,360.8 354.5,362.6 352.9,364.7 351.2,365.7 350.0,365.2 348.8,364.3 347.7,363.8 346.5,372.5 345.4,388.6 344.3,397.3 343.3,388.9 342.3,373.2 341.3,364.8 340.2,373.2 339.0,388.9 337.8,397.3 336.8,388.6 335.8,372.5 334.8,363.8 334.0,364.3 333.2,365.2 332.5,365.7 331.1,365.5 329.8,364.7 328.5,363.8 327.2,361.6 325.9,358.7 324.6,357.2 322.6,358.2 320.6,359.9 318.6,360.8 317.6,360.0 316.7,358.6 315.7,357.8 314.8,358.9 314.0,360.8 313.1,361.8 312.3,360.8 311.5,358.9 310.7,357.8 308.8,359.0 306.8,361.7 304.8,364.8 303.5,367.4 302.2,370.3 300.9,371.7 299.9,371.4 298.9,370.9 297.9,370.7 296.9,377.8 295.9,391.2 294.9,398.3 293.9,389.1 293.0,372.0 292.0,362.8 291.0,365.3 290.0,370.5 289.0,374.6 287.7,377.9 286.4,380.5 285.1,381.5 283.7,380.4 282.4,377.9 281.1,375.6 279.7,373.5 278.2,371.5 276.8,370.7 275.8,379.4 274.8,395.5 273.8,404.3 272.9,395.9 272.1,380.1 271.2,370.7 270.2,369.1 269.3,368.1 268.3,367.7 267.1,367.9 266.0,368.6 264.9,369.7 264.0,380.4 263.2,399.2 262.3,409.2 261.5,398.4 260.6,377.7 259.8,364.8 258.7,361.1 257.6,358.7 256.5,357.8 255.5,357.8 254.5,357.8 253.5,357.8 251.9,364.0 250.2,375.4 248.6,381.5 246.9,374.9 245.3,362.5 243.6,355.9 242.3,356.1 241.0,356.6 239.7,356.9 238.6,356.1 237.4,354.7 236.3,353.9 234.5,361.1 232.6,374.4 230.8,381.5 229.1,375.8 227.5,365.1 225.8,358.8 224.5,358.3 223.2,358.0 221.9,357.8 220.4,371.2 219.0,395.9 217.6,409.2 216.6,399.1 215.6,380.3 214.6,369.7 213.1,368.6 211.6,367.9 210.0,367.7 208.6,376.9 207.1,394.0 205.7,403.3 204.3,394.6 202.9,378.4 201.6,369.7 200.4,370.8 199.3,373.3 198.2,375.6 196.9,378.1 195.6,380.5 194.2,381.5 193.1,380.8 192.0,379.0 190.9,376.6 189.8,372.0 188.8,365.8 187.7,362.8 186.7,372.0 185.8,389.1 184.8,398.3 183.6,390.9 182.5,377.1 181.4,369.7 180.1,369.9 178.8,370.4 177.5,370.7 176.1,369.6 174.8,367.1 173.5,364.8 171.9,361.9 170.2,359.1 168.6,357.8 167.9,358.9 167.3,360.8 166.6,361.8 165.9,360.8 165.3,358.9 164.6,357.8 163.6,358.1 162.6,358.6 161.7,358.8 160.3,358.8 159.0,358.8 157.7,358.8 156.4,359.1 155.1,359.9 153.8,360.8 152.1,362.6 150.5,364.7 148.8,365.7 147.6,365.2 146.4,364.3 145.3,363.8 144.1,372.5 143.0,388.6 141.9,397.3 140.9,388.9 139.9,373.2 138.9,364.8 137.8,373.2 136.6,388.9 135.4,397.3 134.4,388.6 133.4,372.5 132.4,363.8 131.6,364.3 130.8,365.2 130.1,365.7 128.7,365.5 127.4,364.7 126.1,363.8 124.8,361.6 123.5,358.7 122.2,357.2 120.2,358.2 118.2,359.9 116.2,360.8 115.2,360.0 114.3,358.6 113.3,357.8 112.4,358.9 111.6,360.8 110.7,361.8 109.9,360.8 109.1,358.9 108.3,357.8 106.4,359.0 104.4,361.7 102.4,364.8 101.1,367.4 99.8,370.3 98.5,371.7 97.5,371.4 96.5,370.9 95.5,370.7 94.5,377.8 93.5,391.2 92.5,398.3 91.5,389.1 90.6,372.0 89.6,362.8 88.6,365.3 87.6,370.5 86.6,374.6 85.3,377.9 84.0,380.5 82.7,381.5 81.3,380.4 80.0,377.9 78.7,375.6 77.3,373.5 75.8,371.5 74.4,370.7 73.4,379.4 72.4,395.5 71.4,404.3 70.5,395.9 69.7,380.1 68.8,370.7 67.8,369.1 66.9,368.1 65.9,367.7 64.7,367.9 63.6,368.6 62.5,369.7 61.6,380.4 60.8,399.2 59.9,409.2 59.2,401.0 58.4,382.9 57.6,364.8Z" fill="#a4b3cb"/><path d="M57.6,246.8 58.3,260.0 59.1,273.2 59.8,279.2 60.7,272.0 61.7,257.9 62.7,248.5 63.8,245.0 64.9,242.6 66.1,241.7 67.2,244.3 68.4,249.3 69.5,251.9 70.4,246.4 71.2,236.1 72.1,230.6 73.1,234.6 74.1,242.6 75.1,248.5 76.7,251.5 78.2,253.4 79.7,256.2 80.9,261.6 82.0,268.8 83.1,272.4 84.2,268.2 85.2,260.4 86.2,256.2 87.5,263.0 88.7,275.8 90.0,282.6 90.8,272.9 91.7,254.8 92.5,245.1 93.7,245.5 94.8,246.5 95.9,247.6 97.1,249.5 98.2,251.7 99.3,252.8 100.2,249.4 101.1,243.0 101.9,239.1 103.0,238.4 104.2,238.1 105.3,237.4 106.5,233.9 107.6,228.3 108.7,225.5 109.6,227.9 110.4,232.4 111.3,234.8 112.1,231.3 113.0,224.7 113.8,221.2 115.5,223.2 117.3,226.9 119.0,228.9 120.1,227.5 121.2,224.8 122.4,223.4 123.5,225.9 124.6,231.0 125.8,234.8 127.2,237.3 128.6,239.2 130.0,240.0 130.7,238.4 131.4,235.5 132.1,234.0 133.1,244.4 134.1,263.7 135.2,274.1 136.3,264.6 137.4,246.9 138.6,237.4 139.8,246.9 141.1,264.6 142.3,274.1 143.4,263.7 144.4,244.4 145.4,234.0 146.3,235.5 147.1,238.4 148.0,240.0 149.4,239.6 150.8,238.7 152.2,237.4 153.4,233.8 154.5,228.3 155.6,225.5 156.5,226.4 157.3,228.0 158.2,228.9 160.2,226.9 162.2,223.2 164.2,221.2 165.0,224.5 165.9,230.7 166.7,234.0 167.5,231.8 168.2,227.7 168.9,225.5 170.5,228.4 172.0,234.2 173.5,238.3 174.4,238.8 175.2,239.2 176.1,240.0 176.7,243.6 177.2,249.6 177.8,252.8 178.9,251.9 180.1,250.1 181.2,248.5 182.4,247.4 183.5,246.4 184.6,245.9 185.6,255.2 186.7,272.5 187.7,281.8 188.8,275.1 190.0,262.8 191.1,256.2 192.1,260.8 193.0,269.4 194.0,274.1 195.1,270.4 196.3,262.9 197.4,257.0 198.8,253.9 200.3,251.7 201.7,248.5 202.8,242.1 204.0,233.8 205.1,229.7 206.1,235.0 207.1,244.9 208.2,250.2 209.1,248.0 210.1,243.9 211.1,241.7 212.2,242.3 213.3,244.2 214.5,246.8 215.6,256.3 216.7,270.8 217.9,278.3 219.0,265.2 220.2,240.4 221.3,225.5 222.1,223.7 223.0,222.5 223.9,222.1 225.0,222.4 226.1,223.2 227.3,224.6 228.4,237.5 229.5,259.7 230.7,271.5 232.4,257.1 234.1,230.5 235.8,216.1 236.5,218.1 237.2,221.8 237.8,223.8 238.8,222.7 239.7,220.6 240.6,219.5 241.3,220.6 241.9,222.7 242.6,223.8 243.1,222.0 243.5,218.7 244.0,216.9 245.8,231.1 247.6,257.4 249.4,271.5 250.6,259.4 251.7,236.6 252.9,223.8 254.0,222.8 255.1,222.3 256.3,222.1 257.5,222.6 258.8,224.3 260.0,227.2 260.7,241.7 261.4,266.8 262.0,280.0 263.0,272.3 263.9,257.4 264.8,247.6 266.0,244.0 267.3,241.7 268.5,240.8 269.7,243.2 270.8,247.8 271.9,250.2 272.8,244.9 273.6,235.0 274.5,229.7 275.6,233.7 276.8,241.7 277.9,247.6 279.0,249.9 280.2,251.5 281.3,253.6 282.7,260.3 284.2,268.9 285.6,273.2 286.7,268.8 287.9,260.6 289.0,256.2 290.1,263.2 291.3,276.4 292.4,283.5 293.4,273.5 294.5,255.0 295.5,245.1 296.4,245.7 297.4,247.1 298.4,248.5 299.5,250.2 300.7,252.0 301.8,252.8 302.6,249.1 303.5,242.3 304.3,238.3 305.2,237.9 306.1,237.7 306.9,237.4 308.3,233.7 309.7,227.8 311.2,224.6 312.0,227.3 312.9,232.2 313.7,234.8 314.6,231.3 315.4,224.7 316.3,221.2 318.0,223.2 319.7,226.9 321.4,228.9 322.5,227.6 323.7,225.1 324.8,223.8 326.0,226.3 327.1,231.4 328.2,235.7 329.4,238.4 330.5,240.7 331.6,241.7 332.7,239.5 333.7,235.4 334.7,233.1 335.7,243.3 336.6,262.2 337.6,272.4 338.7,263.3 339.9,246.5 341.0,237.4 342.3,247.1 343.5,265.2 344.8,274.9 346.0,264.3 347.2,244.6 348.4,234.0 349.1,235.8 349.9,239.0 350.7,240.8 352.0,239.7 353.4,237.1 354.7,234.0 355.8,230.2 356.9,225.9 358.1,223.8 358.9,225.3 359.8,228.2 360.6,229.7 362.6,227.5 364.6,223.4 366.6,221.2 367.5,224.3 368.3,230.0 369.2,233.1 370.0,231.8 370.9,229.4 371.7,228.0 373.1,230.6 374.6,235.6 376.0,239.1 376.8,239.7 377.7,240.1 378.5,240.8 379.3,244.1 380.0,249.2 380.8,251.9 381.7,251.2 382.7,249.5 383.7,247.6 384.8,245.0 385.9,242.2 387.1,240.8 388.2,251.9 389.3,272.4 390.5,283.5 391.6,276.2 392.8,262.6 393.9,255.3 394.7,259.5 395.6,267.3 396.4,271.5 397.9,267.5 399.3,259.4 400.7,253.6 402.1,251.8 403.6,250.5 405.0,248.5 406.0,243.1 407.0,235.4 408.0,231.4 409.0,236.7 410.0,246.6 410.9,251.9 412.0,249.3 413.0,244.3 414.0,241.7 415.1,242.6 416.2,245.1 417.3,248.5 418.4,258.4 419.5,272.7 420.7,280.0 422.0,265.8 423.3,239.1 424.6,223.8 425.4,222.9 426.3,222.3 427.1,222.1 428.0,222.4 428.9,223.3 429.7,224.6 431.0,237.8 432.3,259.9 433.6,271.5 435.5,257.4 437.3,231.1 439.1,216.9 439.9,218.0 440.8,220.1 441.6,221.2 442.2,220.9 442.8,220.2 443.4,219.5 444.2,218.2 445.1,216.8 445.9,216.1 447.6,230.5 449.3,257.1 451.0,271.5 452.2,260.1 453.3,238.3 454.4,225.5 455.6,223.6 456.7,222.5 457.9,222.1 458.7,222.4 459.6,223.2 460.4,224.6 460.7,226.0 461.0,227.9 461.3,228.9 461.4,228.9 461.5,228.9 461.6,228.9 461.6,288.9 460.7,288.9 459.8,288.9 458.9,288.9 457.9,289.0 456.9,289.4 455.9,289.9 454.3,299.8 452.6,317.2 451.0,326.4 449.3,315.9 447.7,296.4 446.0,285.9 445.4,286.3 444.7,287.2 444.0,287.9 443.1,288.8 442.1,289.5 441.1,289.9 440.3,288.2 439.5,285.2 438.7,283.6 436.9,294.7 435.0,315.3 433.2,326.4 432.2,318.2 431.2,302.6 430.2,292.8 429.2,290.8 428.2,289.4 427.3,288.9 426.3,289.0 425.3,289.3 424.3,289.9 423.0,303.6 421.7,328.1 420.3,341.2 419.2,333.3 418.1,318.1 417.0,308.6 415.8,306.6 414.6,305.2 413.4,304.7 411.8,308.3 410.1,314.9 408.5,318.5 407.2,316.2 405.9,311.9 404.5,309.6 402.9,310.9 401.3,313.8 399.6,317.5 398.6,321.1 397.6,325.3 396.6,327.4 395.5,324.3 394.4,318.6 393.3,315.6 391.4,318.1 389.6,322.9 387.8,325.4 386.4,321.1 385.1,313.0 383.8,308.6 382.8,309.4 381.8,310.8 380.8,311.6 380.2,309.5 379.5,305.4 378.9,302.7 377.9,301.9 376.9,301.4 375.9,300.7 374.3,297.7 372.6,293.8 371.0,291.9 370.2,293.9 369.4,297.7 368.6,299.8 367.7,296.9 366.9,291.7 366.0,288.9 364.7,290.4 363.4,293.3 362.1,294.8 361.1,294.0 360.1,292.6 359.1,291.9 357.5,292.5 355.8,293.9 354.2,295.8 352.9,298.5 351.5,302.0 350.2,303.7 349.4,302.4 348.5,300.0 347.7,298.8 346.5,307.2 345.4,322.9 344.3,331.4 343.3,323.4 342.3,308.7 341.3,300.7 340.2,308.7 339.1,323.4 338.0,331.4 336.9,322.9 335.9,307.2 334.8,298.8 334.0,300.0 333.2,302.4 332.5,303.7 331.1,302.7 329.8,300.3 328.5,297.8 327.2,294.7 325.9,291.4 324.6,289.9 323.2,291.2 321.9,293.5 320.6,294.8 319.2,293.3 317.7,290.4 316.3,288.9 315.4,291.7 314.5,296.9 313.7,299.8 312.7,297.7 311.7,293.9 310.7,291.9 309.4,293.5 308.1,296.9 306.8,299.8 305.8,300.8 304.8,301.6 303.8,302.7 302.8,305.4 301.8,308.9 300.9,310.6 299.9,310.1 298.9,309.2 297.9,308.6 296.6,313.2 295.3,321.8 293.9,326.4 292.3,323.6 290.6,318.4 289.0,315.6 288.0,318.6 287.0,324.3 286.0,327.4 284.7,325.3 283.4,320.8 282.1,316.5 281.1,313.6 280.1,310.9 279.1,309.6 278.1,309.9 277.2,310.6 276.2,311.6 275.3,314.6 274.5,319.1 273.6,321.5 272.8,319.2 272.0,314.4 271.2,310.6 270.2,307.8 269.3,305.6 268.3,304.7 267.1,305.3 266.0,307.0 264.9,309.6 264.0,318.9 263.2,333.6 262.3,341.2 261.5,331.9 260.6,313.5 259.8,300.7 258.7,294.7 257.6,290.5 256.5,288.9 255.5,289.0 254.5,289.4 253.5,289.9 251.9,299.8 250.2,317.2 248.6,326.4 246.9,315.9 245.3,296.4 243.6,285.9 243.0,286.3 242.3,287.2 241.6,287.9 240.7,288.8 239.7,289.5 238.7,289.9 237.9,288.2 237.1,285.2 236.3,283.6 234.5,294.7 232.6,315.3 230.8,326.4 229.8,318.2 228.8,302.6 227.8,292.8 226.8,290.8 225.8,289.4 224.9,288.9 223.9,289.0 222.9,289.3 221.9,289.9 220.6,303.6 219.3,328.1 217.9,341.2 216.8,333.3 215.7,318.1 214.6,308.6 213.4,306.6 212.2,305.2 211.0,304.7 209.4,308.3 207.7,314.9 206.1,318.5 204.8,316.2 203.5,311.9 202.1,309.6 200.5,310.9 198.9,313.8 197.2,317.5 196.2,321.1 195.2,325.3 194.2,327.4 193.1,324.3 192.0,318.6 190.9,315.6 189.0,318.1 187.2,322.9 185.4,325.4 184.0,321.1 182.7,313.0 181.4,308.6 180.4,309.4 179.4,310.8 178.4,311.6 177.8,309.5 177.1,305.4 176.5,302.7 175.5,301.9 174.5,301.4 173.5,300.7 171.9,297.7 170.2,293.8 168.6,291.9 167.8,293.9 167.0,297.7 166.2,299.8 165.3,296.9 164.5,291.7 163.6,288.9 162.3,290.4 161.0,293.3 159.7,294.8 158.7,294.0 157.7,292.6 156.7,291.9 155.1,292.5 153.4,293.9 151.8,295.8 150.5,298.5 149.1,302.0 147.8,303.7 147.0,302.4 146.1,300.0 145.3,298.8 144.1,307.2 143.0,322.9 141.9,331.4 140.9,323.4 139.9,308.7 138.9,300.7 137.8,308.7 136.7,323.4 135.6,331.4 134.5,322.9 133.5,307.2 132.4,298.8 131.6,300.0 130.8,302.4 130.1,303.7 128.7,302.7 127.4,300.3 126.1,297.8 124.8,294.7 123.5,291.4 122.2,289.9 120.8,291.2 119.5,293.5 118.2,294.8 116.8,293.3 115.3,290.4 113.9,288.9 113.0,291.7 112.1,296.9 111.3,299.8 110.3,297.7 109.3,293.9 108.3,291.9 107.0,293.5 105.7,296.9 104.4,299.8 103.4,300.8 102.4,301.6 101.4,302.7 100.4,305.4 99.4,308.9 98.5,310.6 97.5,310.1 96.5,309.2 95.5,308.6 94.2,313.2 92.9,321.8 91.5,326.4 89.9,323.6 88.2,318.4 86.6,315.6 85.6,318.6 84.6,324.3 83.6,327.4 82.3,325.3 81.0,320.8 79.7,316.5 78.7,313.6 77.7,310.9 76.7,309.6 75.7,309.9 74.8,310.6 73.8,311.6 72.9,314.6 72.1,319.1 71.2,321.5 70.4,319.2 69.6,314.4 68.8,310.6 67.8,307.8 66.9,305.6 65.9,304.7 64.7,305.3 63.6,307.0 62.5,309.6 61.6,318.9 60.8,333.6 59.9,341.2 59.2,333.7 58.4,317.2 57.6,300.7Z" fill="#d7bee8" /><polyline points="57.6,426.4 58.4,442.8 59.3,459.1 60.1,466.5 61.0,457.3 61.8,440.2 62.7,430.7 63.8,430.2 64.9,429.9 66.1,429.8 66.9,430.1 67.8,430.6 68.6,431.6 69.6,444.3 70.6,466.6 71.5,478.5 72.7,466.7 73.9,444.6 75.1,432.4 76.1,431.9 77.1,431.7 78.0,431.6 79.4,432.9 80.9,435.3 82.3,436.7 83.1,435.8 84.0,434.1 84.8,433.3 85.7,433.5 86.6,433.9 87.4,434.1 88.5,430.5 89.7,423.8 90.8,420.1 91.7,428.2 92.5,443.1 93.4,451.2 94.2,445.9 95.1,436.0 95.9,430.7 97.1,430.9 98.2,431.3 99.3,431.6 100.2,431.0 101.1,429.9 101.9,429.0 103.3,428.0 104.7,427.2 106.2,426.4 107.3,425.8 108.4,425.2 109.6,424.7 110.7,424.3 111.9,424.0 113.0,423.9 113.8,424.5 114.7,425.8 115.5,426.4 117.5,425.7 119.5,424.3 121.5,423.5 122.7,424.1 123.8,425.4 124.9,426.4 126.1,427.2 127.2,427.9 128.3,428.1 129.8,427.9 131.2,427.5 132.6,427.3 133.6,432.1 134.5,440.9 135.5,445.7 136.4,440.9 137.3,432.1 138.2,427.3 139.2,432.1 140.2,440.9 141.1,445.7 142.3,440.9 143.4,432.1 144.5,427.3 146.3,427.5 148.0,427.9 149.7,428.1 150.8,427.8 151.9,427.1 153.1,426.4 154.5,425.9 155.9,425.4 157.3,425.2 158.5,425.3 159.6,425.5 160.7,425.6 161.9,425.1 163.0,424.3 164.2,423.9 165.3,424.3 166.4,425.1 167.6,425.6 168.4,425.6 169.3,425.6 170.1,425.6 171.0,426.2 171.8,427.3 172.7,428.1 173.5,428.5 174.4,428.7 175.2,429.0 176.1,429.8 177.0,431.0 177.8,431.6 178.9,431.6 180.1,431.6 181.2,431.6 182.1,436.6 182.9,446.1 183.8,451.2 184.7,443.1 185.7,428.2 186.7,420.1 187.4,423.5 188.2,429.9 188.9,433.3 189.7,433.0 190.6,432.6 191.4,432.4 192.3,433.5 193.2,435.6 194.0,436.7 195.1,435.9 196.3,434.4 197.4,433.3 199.0,432.4 200.5,431.8 202.0,431.6 203.2,443.7 204.3,466.3 205.4,478.5 206.7,466.2 208.1,443.4 209.4,430.7 210.5,430.2 211.6,429.9 212.8,429.8 213.5,430.1 214.2,430.6 215.0,431.6 215.8,441.1 216.6,457.7 217.4,466.5 218.3,456.3 219.2,437.2 220.1,426.4 221.4,425.5 222.6,424.9 223.9,424.7 225.0,424.8 226.1,425.1 227.3,425.6 228.7,428.7 230.1,433.9 231.5,436.7 233.0,432.7 234.4,425.3 235.8,421.3 236.8,422.2 237.8,423.8 238.9,424.7 239.5,424.6 240.2,424.3 240.9,423.9 241.8,423.2 242.6,422.5 243.5,422.2 244.9,425.9 246.3,432.9 247.7,436.7 249.4,433.7 251.1,428.2 252.9,424.7 254.0,424.3 255.1,424.0 256.3,423.9 257.3,424.2 258.4,425.1 259.4,426.4 260.5,437.5 261.5,456.5 262.5,466.5 263.4,457.3 264.2,440.2 265.1,430.7 266.2,430.2 267.3,429.9 268.5,429.8 269.3,430.1 270.2,430.6 271.0,431.6 272.0,444.3 273.0,466.6 273.9,478.5 275.1,466.7 276.3,444.6 277.5,432.4 278.5,431.9 279.5,431.7 280.4,431.6 281.8,432.9 283.3,435.3 284.7,436.7 285.5,435.8 286.4,434.1 287.2,433.3 288.1,433.5 289.0,433.9 289.8,434.1 290.9,430.5 292.1,423.8 293.2,420.1 294.1,428.2 294.9,443.1 295.8,451.2 296.6,445.9 297.5,436.0 298.3,430.7 299.5,430.9 300.6,431.3 301.7,431.6 302.6,431.0 303.5,429.9 304.3,429.0 305.7,428.0 307.1,427.2 308.6,426.4 309.7,425.8 310.8,425.2 312.0,424.7 313.1,424.3 314.3,424.0 315.4,423.9 316.2,424.5 317.1,425.8 317.9,426.4 319.9,425.7 321.9,424.3 323.9,423.5 325.1,424.1 326.2,425.4 327.3,426.4 328.5,427.2 329.6,427.9 330.7,428.1 332.2,427.9 333.6,427.5 335.0,427.3 336.0,432.1 336.9,440.9 337.9,445.7 338.8,440.9 339.7,432.1 340.6,427.3 341.6,432.1 342.6,440.9 343.5,445.7 344.7,440.9 345.8,432.1 346.9,427.3 348.7,427.5 350.4,427.9 352.1,428.1 353.2,427.8 354.3,427.1 355.5,426.4 356.9,425.9 358.3,425.4 359.7,425.2 360.9,425.3 362.0,425.5 363.1,425.6 364.3,425.1 365.4,424.3 366.6,423.9 367.7,424.3 368.8,425.1 370.0,425.6 370.8,425.6 371.7,425.6 372.5,425.6 373.4,426.2 374.2,427.3 375.1,428.1 375.9,428.5 376.8,428.7 377.6,429.0 378.5,429.8 379.4,431.0 380.2,431.6 381.3,431.6 382.5,431.6 383.6,431.6 384.5,436.6 385.3,446.1 386.2,451.2 387.1,443.1 388.1,428.2 389.1,420.1 389.8,423.5 390.6,429.9 391.3,433.3 392.1,433.0 393.0,432.6 393.8,432.4 394.7,433.5 395.6,435.6 396.4,436.7 397.5,435.9 398.7,434.4 399.8,433.3 401.4,432.4 402.9,431.8 404.4,431.6 405.6,443.7 406.7,466.3 407.8,478.5 409.1,466.2 410.5,443.4 411.8,430.7 412.9,430.2 414.0,429.9 415.2,429.8 415.9,430.1 416.6,430.6 417.4,431.6 418.2,441.1 419.0,457.7 419.8,466.5 420.7,456.3 421.6,437.2 422.5,426.4 423.8,425.5 425.0,424.9 426.3,424.7 427.4,424.8 428.5,425.1 429.7,425.6 431.1,428.7 432.5,433.9 433.9,436.7 435.4,432.7 436.8,425.3 438.2,421.3 439.2,422.2 440.2,423.8 441.3,424.7 441.9,424.6 442.6,424.3 443.3,423.9 444.2,423.2 445.0,422.5 445.9,422.2 447.3,425.9 448.7,432.9 450.1,436.7 451.8,433.7 453.5,428.2 455.3,424.7 456.4,424.3 457.5,424.0 458.7,423.9 459.6,423.9 460.6,423.9 461.6,423.9" fill="none" stroke="#6bb5d6" stroke-width="0.95"/><polyline points="57.6,364.8 58.4,382.9 59.2,401.0 59.9,409.2 60.8,399.2 61.6,380.4 62.5,369.7 63.6,368.6 64.7,367.9 65.9,367.7 66.9,368.1 67.8,369.1 68.8,370.7 69.7,380.1 70.5,395.9 71.4,404.3 72.4,395.5 73.4,379.4 74.4,370.7 75.8,371.5 77.3,373.5 78.7,375.6 80.0,377.9 81.3,380.4 82.7,381.5 84.0,380.5 85.3,377.9 86.6,374.6 87.6,370.5 88.6,365.3 89.6,362.8 90.6,372.0 91.5,389.1 92.5,398.3 93.5,391.2 94.5,377.8 95.5,370.7 96.5,370.9 97.5,371.4 98.5,371.7 99.8,370.3 101.1,367.4 102.4,364.8 104.4,361.7 106.4,359.0 108.3,357.8 109.1,358.9 109.9,360.8 110.7,361.8 111.6,360.8 112.4,358.9 113.3,357.8 114.3,358.6 115.2,360.0 116.2,360.8 118.2,359.9 120.2,358.2 122.2,357.2 123.5,358.7 124.8,361.6 126.1,363.8 127.4,364.7 128.7,365.5 130.1,365.7 130.8,365.2 131.6,364.3 132.4,363.8 133.4,372.5 134.4,388.6 135.4,397.3 136.6,388.9 137.8,373.2 138.9,364.8 139.9,373.2 140.9,388.9 141.9,397.3 143.0,388.6 144.1,372.5 145.3,363.8 146.4,364.3 147.6,365.2 148.8,365.7 150.5,364.7 152.1,362.6 153.8,360.8 155.1,359.9 156.4,359.1 157.7,358.8 159.0,358.8 160.3,358.8 161.7,358.8 162.6,358.6 163.6,358.1 164.6,357.8 165.3,358.9 165.9,360.8 166.6,361.8 167.3,360.8 167.9,358.9 168.6,357.8 170.2,359.1 171.9,361.9 173.5,364.8 174.8,367.1 176.1,369.6 177.5,370.7 178.8,370.4 180.1,369.9 181.4,369.7 182.5,377.1 183.6,390.9 184.8,398.3 185.8,389.1 186.7,372.0 187.7,362.8 188.8,365.8 189.8,372.0 190.9,376.6 192.0,379.0 193.1,380.8 194.2,381.5 195.6,380.5 196.9,378.1 198.2,375.6 199.3,373.3 200.4,370.8 201.6,369.7 202.9,378.4 204.3,394.6 205.7,403.3 207.1,394.0 208.6,376.9 210.0,367.7 211.6,367.9 213.1,368.6 214.6,369.7 215.6,380.3 216.6,399.1 217.6,409.2 219.0,395.9 220.4,371.2 221.9,357.8 223.2,358.0 224.5,358.3 225.8,358.8 227.5,365.1 229.1,375.8 230.8,381.5 232.6,374.4 234.5,361.1 236.3,353.9 237.4,354.7 238.6,356.1 239.7,356.9 241.0,356.6 242.3,356.1 243.6,355.9 245.3,362.5 246.9,374.9 248.6,381.5 250.2,375.4 251.9,364.0 253.5,357.8 254.5,357.8 255.5,357.8 256.5,357.8 257.6,358.7 258.7,361.1 259.8,364.8 260.6,377.7 261.5,398.4 262.3,409.2 263.2,399.2 264.0,380.4 264.9,369.7 266.0,368.6 267.1,367.9 268.3,367.7 269.3,368.1 270.2,369.1 271.2,370.7 272.1,380.1 272.9,395.9 273.8,404.3 274.8,395.5 275.8,379.4 276.8,370.7 278.2,371.5 279.7,373.5 281.1,375.6 282.4,377.9 283.7,380.4 285.1,381.5 286.4,380.5 287.7,377.9 289.0,374.6 290.0,370.5 291.0,365.3 292.0,362.8 293.0,372.0 293.9,389.1 294.9,398.3 295.9,391.2 296.9,377.8 297.9,370.7 298.9,370.9 299.9,371.4 300.9,371.7 302.2,370.3 303.5,367.4 304.8,364.8 306.8,361.7 308.8,359.0 310.7,357.8 311.5,358.9 312.3,360.8 313.1,361.8 314.0,360.8 314.8,358.9 315.7,357.8 316.7,358.6 317.6,360.0 318.6,360.8 320.6,359.9 322.6,358.2 324.6,357.2 325.9,358.7 327.2,361.6 328.5,363.8 329.8,364.7 331.1,365.5 332.5,365.7 333.2,365.2 334.0,364.3 334.8,363.8 335.8,372.5 336.8,388.6 337.8,397.3 339.0,388.9 340.2,373.2 341.3,364.8 342.3,373.2 343.3,388.9 344.3,397.3 345.4,388.6 346.5,372.5 347.7,363.8 348.8,364.3 350.0,365.2 351.2,365.7 352.9,364.7 354.5,362.6 356.2,360.8 357.5,359.9 358.8,359.1 360.1,358.8 361.4,358.8 362.7,358.8 364.1,358.8 365.0,358.6 366.0,358.1 367.0,357.8 367.7,358.9 368.3,360.8 369.0,361.8 369.7,360.8 370.3,358.9 371.0,357.8 372.6,359.1 374.3,361.9 375.9,364.8 377.2,367.1 378.5,369.6 379.9,370.7 381.2,370.4 382.5,369.9 383.8,369.7 384.9,377.1 386.0,390.9 387.2,398.3 388.2,389.1 389.1,372.0 390.1,362.8 391.2,365.8 392.2,372.0 393.3,376.6 394.4,379.0 395.5,380.8 396.6,381.5 398.0,380.5 399.3,378.1 400.6,375.6 401.7,373.3 402.8,370.8 404.0,369.7 405.3,378.4 406.7,394.6 408.1,403.3 409.5,394.0 411.0,376.9 412.4,367.7 414.0,367.9 415.5,368.6 417.0,369.7 418.0,380.3 419.0,399.1 420.0,409.2 421.4,395.9 422.8,371.2 424.3,357.8 425.6,358.0 426.9,358.3 428.2,358.8 429.9,365.1 431.5,375.8 433.2,381.5 435.0,374.4 436.9,361.1 438.7,353.9 439.8,354.7 441.0,356.1 442.1,356.9 443.4,356.6 444.7,356.1 446.0,355.9 447.7,362.5 449.3,374.9 451.0,381.5 452.6,375.4 454.3,364.0 455.9,357.8 456.9,357.8 457.9,357.8 458.9,357.8 459.8,357.8 460.7,357.8 461.6,357.8" fill="none" stroke="#2b5fc7" stroke-width="0.95"/><polyline points="57.6,300.7 58.4,317.2 59.2,333.7 59.9,341.2 60.8,333.6 61.6,318.9 62.5,309.6 63.6,307.0 64.7,305.3 65.9,304.7 66.9,305.6 67.8,307.8 68.8,310.6 69.6,314.4 70.4,319.2 71.2,321.5 72.1,319.1 72.9,314.6 73.8,311.6 74.8,310.6 75.7,309.9 76.7,309.6 77.7,310.9 78.7,313.6 79.7,316.5 81.0,320.8 82.3,325.3 83.6,327.4 84.6,324.3 85.6,318.6 86.6,315.6 88.2,318.4 89.9,323.6 91.5,326.4 92.9,321.8 94.2,313.2 95.5,308.6 96.5,309.2 97.5,310.1 98.5,310.6 99.4,308.9 100.4,305.4 101.4,302.7 102.4,301.6 103.4,300.8 104.4,299.8 105.7,296.9 107.0,293.5 108.3,291.9 109.3,293.9 110.3,297.7 111.3,299.8 112.1,296.9 113.0,291.7 113.9,288.9 115.3,290.4 116.8,293.3 118.2,294.8 119.5,293.5 120.8,291.2 122.2,289.9 123.5,291.4 124.8,294.7 126.1,297.8 127.4,300.3 128.7,302.7 130.1,303.7 130.8,302.4 131.6,300.0 132.4,298.8 133.5,307.2 134.5,322.9 135.6,331.4 136.7,323.4 137.8,308.7 138.9,300.7 139.9,308.7 140.9,323.4 141.9,331.4 143.0,322.9 144.1,307.2 145.3,298.8 146.1,300.0 147.0,302.4 147.8,303.7 149.1,302.0 150.5,298.5 151.8,295.8 153.4,293.9 155.1,292.5 156.7,291.9 157.7,292.6 158.7,294.0 159.7,294.8 161.0,293.3 162.3,290.4 163.6,288.9 164.5,291.7 165.3,296.9 166.2,299.8 167.0,297.7 167.8,293.9 168.6,291.9 170.2,293.8 171.9,297.7 173.5,300.7 174.5,301.4 175.5,301.9 176.5,302.7 177.1,305.4 177.8,309.5 178.4,311.6 179.4,310.8 180.4,309.4 181.4,308.6 182.7,313.0 184.0,321.1 185.4,325.4 187.2,322.9 189.0,318.1 190.9,315.6 192.0,318.6 193.1,324.3 194.2,327.4 195.2,325.3 196.2,321.1 197.2,317.5 198.9,313.8 200.5,310.9 202.1,309.6 203.5,311.9 204.8,316.2 206.1,318.5 207.7,314.9 209.4,308.3 211.0,304.7 212.2,305.2 213.4,306.6 214.6,308.6 215.7,318.1 216.8,333.3 217.9,341.2 219.3,328.1 220.6,303.6 221.9,289.9 222.9,289.3 223.9,289.0 224.9,288.9 225.8,289.4 226.8,290.8 227.8,292.8 228.8,302.6 229.8,318.2 230.8,326.4 232.6,315.3 234.5,294.7 236.3,283.6 237.1,285.2 237.9,288.2 238.7,289.9 239.7,289.5 240.7,288.8 241.6,287.9 242.3,287.2 243.0,286.3 243.6,285.9 245.3,296.4 246.9,315.9 248.6,326.4 250.2,317.2 251.9,299.8 253.5,289.9 254.5,289.4 255.5,289.0 256.5,288.9 257.6,290.5 258.7,294.7 259.8,300.7 260.6,313.5 261.5,331.9 262.3,341.2 263.2,333.6 264.0,318.9 264.9,309.6 266.0,307.0 267.1,305.3 268.3,304.7 269.3,305.6 270.2,307.8 271.2,310.6 272.0,314.4 272.8,319.2 273.6,321.5 274.5,319.1 275.3,314.6 276.2,311.6 277.2,310.6 278.1,309.9 279.1,309.6 280.1,310.9 281.1,313.6 282.1,316.5 283.4,320.8 284.7,325.3 286.0,327.4 287.0,324.3 288.0,318.6 289.0,315.6 290.6,318.4 292.3,323.6 293.9,326.4 295.3,321.8 296.6,313.2 297.9,308.6 298.9,309.2 299.9,310.1 300.9,310.6 301.8,308.9 302.8,305.4 303.8,302.7 304.8,301.6 305.8,300.8 306.8,299.8 308.1,296.9 309.4,293.5 310.7,291.9 311.7,293.9 312.7,297.7 313.7,299.8 314.5,296.9 315.4,291.7 316.3,288.9 317.7,290.4 319.2,293.3 320.6,294.8 321.9,293.5 323.2,291.2 324.6,289.9 325.9,291.4 327.2,294.7 328.5,297.8 329.8,300.3 331.1,302.7 332.5,303.7 333.2,302.4 334.0,300.0 334.8,298.8 335.9,307.2 336.9,322.9 338.0,331.4 339.1,323.4 340.2,308.7 341.3,300.7 342.3,308.7 343.3,323.4 344.3,331.4 345.4,322.9 346.5,307.2 347.7,298.8 348.5,300.0 349.4,302.4 350.2,303.7 351.5,302.0 352.9,298.5 354.2,295.8 355.8,293.9 357.5,292.5 359.1,291.9 360.1,292.6 361.1,294.0 362.1,294.8 363.4,293.3 364.7,290.4 366.0,288.9 366.9,291.7 367.7,296.9 368.6,299.8 369.4,297.7 370.2,293.9 371.0,291.9 372.6,293.8 374.3,297.7 375.9,300.7 376.9,301.4 377.9,301.9 378.9,302.7 379.5,305.4 380.2,309.5 380.8,311.6 381.8,310.8 382.8,309.4 383.8,308.6 385.1,313.0 386.4,321.1 387.8,325.4 389.6,322.9 391.4,318.1 393.3,315.6 394.4,318.6 395.5,324.3 396.6,327.4 397.6,325.3 398.6,321.1 399.6,317.5 401.3,313.8 402.9,310.9 404.5,309.6 405.9,311.9 407.2,316.2 408.5,318.5 410.1,314.9 411.8,308.3 413.4,304.7 414.6,305.2 415.8,306.6 417.0,308.6 418.1,318.1 419.2,333.3 420.3,341.2 421.7,328.1 423.0,303.6 424.3,289.9 425.3,289.3 426.3,289.0 427.3,288.9 428.2,289.4 429.2,290.8 430.2,292.8 431.2,302.6 432.2,318.2 433.2,326.4 435.0,315.3 436.9,294.7 438.7,283.6 439.5,285.2 440.3,288.2 441.1,289.9 442.1,289.5 443.1,288.8 444.0,287.9 444.7,287.2 445.4,286.3 446.0,285.9 447.7,296.4 449.3,315.9 451.0,326.4 452.6,317.2 454.3,299.8 455.9,289.9 456.9,289.4 457.9,289.0 458.9,288.9 459.8,288.9 460.7,288.9 461.6,288.9" fill="none" stroke="#1c2f73" stroke-width="0.95"/><polyline points="57.6,246.8 58.3,260.0 59.1,273.2 59.8,279.2 60.7,272.0 61.7,257.9 62.7,248.5 63.8,245.0 64.9,242.6 66.1,241.7 67.2,244.3 68.4,249.3 69.5,251.9 70.4,246.4 71.2,236.1 72.1,230.6 73.1,234.6 74.1,242.6 75.1,248.5 76.7,251.5 78.2,253.4 79.7,256.2 80.9,261.6 82.0,268.8 83.1,272.4 84.2,268.2 85.2,260.4 86.2,256.2 87.5,263.0 88.7,275.8 90.0,282.6 90.8,272.9 91.7,254.8 92.5,245.1 93.7,245.5 94.8,246.5 95.9,247.6 97.1,249.5 98.2,251.7 99.3,252.8 100.2,249.4 101.1,243.0 101.9,239.1 103.0,238.4 104.2,238.1 105.3,237.4 106.5,233.9 107.6,228.3 108.7,225.5 109.6,227.9 110.4,232.4 111.3,234.8 112.1,231.3 113.0,224.7 113.8,221.2 115.5,223.2 117.3,226.9 119.0,228.9 120.1,227.5 121.2,224.8 122.4,223.4 123.5,225.9 124.6,231.0 125.8,234.8 127.2,237.3 128.6,239.2 130.0,240.0 130.7,238.4 131.4,235.5 132.1,234.0 133.1,244.4 134.1,263.7 135.2,274.1 136.3,264.6 137.4,246.9 138.6,237.4 139.8,246.9 141.1,264.6 142.3,274.1 143.4,263.7 144.4,244.4 145.4,234.0 146.3,235.5 147.1,238.4 148.0,240.0 149.4,239.6 150.8,238.7 152.2,237.4 153.4,233.8 154.5,228.3 155.6,225.5 156.5,226.4 157.3,228.0 158.2,228.9 160.2,226.9 162.2,223.2 164.2,221.2 165.0,224.5 165.9,230.7 166.7,234.0 167.5,231.8 168.2,227.7 168.9,225.5 170.5,228.4 172.0,234.2 173.5,238.3 174.4,238.8 175.2,239.2 176.1,240.0 176.7,243.6 177.2,249.6 177.8,252.8 178.9,251.9 180.1,250.1 181.2,248.5 182.4,247.4 183.5,246.4 184.6,245.9 185.6,255.2 186.7,272.5 187.7,281.8 188.8,275.1 190.0,262.8 191.1,256.2 192.1,260.8 193.0,269.4 194.0,274.1 195.1,270.4 196.3,262.9 197.4,257.0 198.8,253.9 200.3,251.7 201.7,248.5 202.8,242.1 204.0,233.8 205.1,229.7 206.1,235.0 207.1,244.9 208.2,250.2 209.1,248.0 210.1,243.9 211.1,241.7 212.2,242.3 213.3,244.2 214.5,246.8 215.6,256.3 216.7,270.8 217.9,278.3 219.0,265.2 220.2,240.4 221.3,225.5 222.1,223.7 223.0,222.5 223.9,222.1 225.0,222.4 226.1,223.2 227.3,224.6 228.4,237.5 229.5,259.7 230.7,271.5 232.4,257.1 234.1,230.5 235.8,216.1 236.5,218.1 237.2,221.8 237.8,223.8 238.8,222.7 239.7,220.6 240.6,219.5 241.3,220.6 241.9,222.7 242.6,223.8 243.1,222.0 243.5,218.7 244.0,216.9 245.8,231.1 247.6,257.4 249.4,271.5 250.6,259.4 251.7,236.6 252.9,223.8 254.0,222.8 255.1,222.3 256.3,222.1 257.5,222.6 258.8,224.3 260.0,227.2 260.7,241.7 261.4,266.8 262.0,280.0 263.0,272.3 263.9,257.4 264.8,247.6 266.0,244.0 267.3,241.7 268.5,240.8 269.7,243.2 270.8,247.8 271.9,250.2 272.8,244.9 273.6,235.0 274.5,229.7 275.6,233.7 276.8,241.7 277.9,247.6 279.0,249.9 280.2,251.5 281.3,253.6 282.7,260.3 284.2,268.9 285.6,273.2 286.7,268.8 287.9,260.6 289.0,256.2 290.1,263.2 291.3,276.4 292.4,283.5 293.4,273.5 294.5,255.0 295.5,245.1 296.4,245.7 297.4,247.1 298.4,248.5 299.5,250.2 300.7,252.0 301.8,252.8 302.6,249.1 303.5,242.3 304.3,238.3 305.2,237.9 306.1,237.7 306.9,237.4 308.3,233.7 309.7,227.8 311.2,224.6 312.0,227.3 312.9,232.2 313.7,234.8 314.6,231.3 315.4,224.7 316.3,221.2 318.0,223.2 319.7,226.9 321.4,228.9 322.5,227.6 323.7,225.1 324.8,223.8 326.0,226.3 327.1,231.4 328.2,235.7 329.4,238.4 330.5,240.7 331.6,241.7 332.7,239.5 333.7,235.4 334.7,233.1 335.7,243.3 336.6,262.2 337.6,272.4 338.7,263.3 339.9,246.5 341.0,237.4 342.3,247.1 343.5,265.2 344.8,274.9 346.0,264.3 347.2,244.6 348.4,234.0 349.1,235.8 349.9,239.0 350.7,240.8 352.0,239.7 353.4,237.1 354.7,234.0 355.8,230.2 356.9,225.9 358.1,223.8 358.9,225.3 359.8,228.2 360.6,229.7 362.6,227.5 364.6,223.4 366.6,221.2 367.5,224.3 368.3,230.0 369.2,233.1 370.0,231.8 370.9,229.4 371.7,228.0 373.1,230.6 374.6,235.6 376.0,239.1 376.8,239.7 377.7,240.1 378.5,240.8 379.3,244.1 380.0,249.2 380.8,251.9 381.7,251.2 382.7,249.5 383.7,247.6 384.8,245.0 385.9,242.2 387.1,240.8 388.2,251.9 389.3,272.4 390.5,283.5 391.6,276.2 392.8,262.6 393.9,255.3 394.7,259.5 395.6,267.3 396.4,271.5 397.9,267.5 399.3,259.4 400.7,253.6 402.1,251.8 403.6,250.5 405.0,248.5 406.0,243.1 407.0,235.4 408.0,231.4 409.0,236.7 410.0,246.6 410.9,251.9 412.0,249.3 413.0,244.3 414.0,241.7 415.1,242.6 416.2,245.1 417.3,248.5 418.4,258.4 419.5,272.7 420.7,280.0 422.0,265.8 423.3,239.1 424.6,223.8 425.4,222.9 426.3,222.3 427.1,222.1 428.0,222.4 428.9,223.3 429.7,224.6 431.0,237.8 432.3,259.9 433.6,271.5 435.5,257.4 437.3,231.1 439.1,216.9 439.9,218.0 440.8,220.1 441.6,221.2 442.2,220.9 442.8,220.2 443.4,219.5 444.2,218.2 445.1,216.8 445.9,216.1 447.6,230.5 449.3,257.1 451.0,271.5 452.2,260.1 453.3,238.3 454.4,225.5 455.6,223.6 456.7,222.5 457.9,222.1 458.7,222.4 459.6,223.2 460.4,224.6 460.7,226.0 461.0,227.9 461.3,228.9 461.4,228.9 461.5,228.9 461.6,228.9" fill="none" stroke="#9b4fcf" stroke-width="0.95"/><g stroke="rgba(0,0,0,0.045)" stroke-width="1"><path d="M57.6 452.6 H461.6"/><path d="M57.6 413.7 H461.6"/><path d="M57.6 374.9 H461.6"/><path d="M57.6 336.0 H461.6"/><path d="M57.6 297.1 H461.6"/><path d="M57.6 258.2 H461.6"/><path d="M57.6 219.3 H461.6"/><path d="M72.2 188.6 V491.4"/><path d="M173.5 188.6 V491.4"/><path d="M274.8 188.6 V491.4"/><path d="M376.1 188.6 V491.4"/></g><g stroke="rgba(0,0,0,0.045)" stroke-width="1"><path d="M529.5 439.4 H922"/><path d="M529.5 408.0 H922"/><path d="M529.5 376.5 H922"/><path d="M529.5 345.1 H922"/><path d="M529.5 313.7 H922"/><path d="M529.5 282.3 H922"/><path d="M529.5 250.9 H922"/><path d="M529.5 219.4 H922"/><path d="M529.5 188.0 H922"/><path d="M545.5 188.2 V470.8"/><path d="M643.5 188.2 V470.8"/><path d="M741.5 188.2 V470.8"/><path d="M839.4 188.2 V470.8"/></g><rect x="530.0" y="254.5" width="3.4" height="57.0" fill="url(#gO)" stroke="url(#gOs)" stroke-width="1"/><rect x="530.0" y="312.5" width="3.4" height="59.0" fill="url(#gR)" stroke="url(#gRs)" stroke-width="1"/><rect x="530.0" y="372.5" width="3.4" height="56.3" fill="url(#gB)" stroke="url(#gBs)" stroke-width="1"/><rect x="530.0" y="429.8" width="3.4" height="40.5" fill="url(#gG)" stroke="url(#gGs)" stroke-width="1"/><rect x="541.0" y="245.5" width="8.3" height="55.8" fill="url(#gO)" stroke="url(#gOs)" stroke-width="1"/><rect x="541.0" y="302.3" width="8.3" height="55.9" fill="url(#gR)" stroke="url(#gRs)" stroke-width="1"/><rect x="541.0" y="359.2" width="8.3" height="57.0" fill="url(#gB)" stroke="url(#gBs)" stroke-width="1"/><rect x="541.0" y="417.2" width="8.3" height="53.1" fill="url(#gG)" stroke="url(#gGs)" stroke-width="1"/><rect x="557.3" y="235.9" width="8.3" height="58.6" fill="url(#gO)" stroke="url(#gOs)" stroke-width="1"/><rect x="557.3" y="295.5" width="8.3" height="59.1" fill="url(#gR)" stroke="url(#gRs)" stroke-width="1"/><rect x="557.3" y="355.6" width="8.3" height="57.0" fill="url(#gB)" stroke="url(#gBs)" stroke-width="1"/><rect x="557.3" y="413.6" width="8.3" height="56.7" fill="url(#gG)" stroke="url(#gGs)" stroke-width="1"/><rect x="574.2" y="215.5" width="8.3" height="62.5" fill="url(#gO)" stroke="url(#gOs)" stroke-width="1"/><rect x="574.2" y="279.0" width="8.3" height="63.4" fill="url(#gR)" stroke="url(#gRs)" stroke-width="1"/><rect x="574.2" y="343.4" width="8.3" height="62.9" fill="url(#gB)" stroke="url(#gBs)" stroke-width="1"/><rect x="574.2" y="407.3" width="8.3" height="63.0" fill="url(#gG)" stroke="url(#gGs)" stroke-width="1"/><rect x="590.1" y="231.2" width="8.3" height="58.8" fill="url(#gO)" stroke="url(#gOs)" stroke-width="1"/><rect x="590.1" y="291.0" width="8.3" height="62.0" fill="url(#gR)" stroke="url(#gRs)" stroke-width="1"/><rect x="590.1" y="354.0" width="8.3" height="57.8" fill="url(#gB)" stroke="url(#gBs)" stroke-width="1"/><rect x="590.1" y="412.8" width="8.3" height="57.5" fill="url(#gG)" stroke="url(#gGs)" stroke-width="1"/><rect x="606.5" y="228.5" width="8.3" height="59.9" fill="url(#gO)" stroke="url(#gOs)" stroke-width="1"/><rect x="606.5" y="289.4" width="8.3" height="62.1" fill="url(#gR)" stroke="url(#gRs)" stroke-width="1"/><rect x="606.5" y="352.5" width="8.3" height="59.0" fill="url(#gB)" stroke="url(#gBs)" stroke-width="1"/><rect x="606.5" y="412.5" width="8.3" height="57.8" fill="url(#gG)" stroke="url(#gGs)" stroke-width="1"/><rect x="622.7" y="216.9" width="8.3" height="62.5" fill="url(#gO)" stroke="url(#gOs)" stroke-width="1"/><rect x="622.7" y="280.4" width="8.3" height="63.6" fill="url(#gR)" stroke="url(#gRs)" stroke-width="1"/><rect x="622.7" y="345.0" width="8.3" height="62.5" fill="url(#gB)" stroke="url(#gBs)" stroke-width="1"/><rect x="622.7" y="408.5" width="8.3" height="61.8" fill="url(#gG)" stroke="url(#gGs)" stroke-width="1"/><rect x="639.0" y="241.8" width="8.3" height="56.2" fill="url(#gO)" stroke="url(#gOs)" stroke-width="1"/><rect x="639.0" y="299.0" width="8.3" height="57.5" fill="url(#gR)" stroke="url(#gRs)" stroke-width="1"/><rect x="639.0" y="357.5" width="8.3" height="56.0" fill="url(#gB)" stroke="url(#gBs)" stroke-width="1"/><rect x="639.0" y="414.5" width="8.3" height="55.8" fill="url(#gG)" stroke="url(#gGs)" stroke-width="1"/><rect x="655.4" y="241.5" width="8.3" height="59.8" fill="url(#gO)" stroke="url(#gOs)" stroke-width="1"/><rect x="655.4" y="302.3" width="8.3" height="60.6" fill="url(#gR)" stroke="url(#gRs)" stroke-width="1"/><rect x="655.4" y="363.9" width="8.3" height="59.4" fill="url(#gB)" stroke="url(#gBs)" stroke-width="1"/><rect x="655.4" y="424.3" width="8.3" height="46.0" fill="url(#gG)" stroke="url(#gGs)" stroke-width="1"/><rect x="671.7" y="233.5" width="8.3" height="59.0" fill="url(#gO)" stroke="url(#gOs)" stroke-width="1"/><rect x="671.7" y="293.5" width="8.3" height="61.5" fill="url(#gR)" stroke="url(#gRs)" stroke-width="1"/><rect x="671.7" y="356.0" width="8.3" height="59.4" fill="url(#gB)" stroke="url(#gBs)" stroke-width="1"/><rect x="671.7" y="416.4" width="8.3" height="53.9" fill="url(#gG)" stroke="url(#gGs)" stroke-width="1"/><rect x="688.2" y="224.5" width="8.3" height="60.5" fill="url(#gO)" stroke="url(#gOs)" stroke-width="1"/><rect x="688.2" y="286.0" width="8.3" height="61.5" fill="url(#gR)" stroke="url(#gRs)" stroke-width="1"/><rect x="688.2" y="348.5" width="8.3" height="61.0" fill="url(#gB)" stroke="url(#gBs)" stroke-width="1"/><rect x="688.2" y="410.5" width="8.3" height="59.8" fill="url(#gG)" stroke="url(#gGs)" stroke-width="1"/><rect x="704.5" y="225.5" width="8.3" height="60.8" fill="url(#gO)" stroke="url(#gOs)" stroke-width="1"/><rect x="704.5" y="287.3" width="8.3" height="60.6" fill="url(#gR)" stroke="url(#gRs)" stroke-width="1"/><rect x="704.5" y="348.9" width="8.3" height="60.6" fill="url(#gB)" stroke="url(#gBs)" stroke-width="1"/><rect x="704.5" y="410.5" width="8.3" height="59.8" fill="url(#gG)" stroke="url(#gGs)" stroke-width="1"/><rect x="721.1" y="237.2" width="8.3" height="60.8" fill="url(#gO)" stroke="url(#gOs)" stroke-width="1"/><rect x="721.1" y="299.0" width="8.3" height="63.1" fill="url(#gR)" stroke="url(#gRs)" stroke-width="1"/><rect x="721.1" y="363.1" width="8.3" height="61.0" fill="url(#gB)" stroke="url(#gBs)" stroke-width="1"/><rect x="721.1" y="425.1" width="8.3" height="45.2" fill="url(#gG)" stroke="url(#gGs)" stroke-width="1"/><rect x="737.0" y="245.1" width="8.3" height="56.8" fill="url(#gO)" stroke="url(#gOs)" stroke-width="1"/><rect x="737.0" y="302.9" width="8.3" height="55.6" fill="url(#gR)" stroke="url(#gRs)" stroke-width="1"/><rect x="737.0" y="359.5" width="8.3" height="57.1" fill="url(#gB)" stroke="url(#gBs)" stroke-width="1"/><rect x="737.0" y="417.6" width="8.3" height="52.7" fill="url(#gG)" stroke="url(#gGs)" stroke-width="1"/><rect x="753.3" y="237.2" width="8.3" height="57.5" fill="url(#gO)" stroke="url(#gOs)" stroke-width="1"/><rect x="753.3" y="295.7" width="8.3" height="58.5" fill="url(#gR)" stroke="url(#gRs)" stroke-width="1"/><rect x="753.3" y="355.2" width="8.3" height="57.5" fill="url(#gB)" stroke="url(#gBs)" stroke-width="1"/><rect x="753.3" y="413.7" width="8.3" height="56.6" fill="url(#gG)" stroke="url(#gGs)" stroke-width="1"/><rect x="769.5" y="214.5" width="8.3" height="63.9" fill="url(#gO)" stroke="url(#gOs)" stroke-width="1"/><rect x="769.5" y="279.4" width="8.3" height="63.0" fill="url(#gR)" stroke="url(#gRs)" stroke-width="1"/><rect x="769.5" y="343.4" width="8.3" height="63.3" fill="url(#gB)" stroke="url(#gBs)" stroke-width="1"/><rect x="769.5" y="407.7" width="8.3" height="62.6" fill="url(#gG)" stroke="url(#gGs)" stroke-width="1"/><rect x="786.2" y="231.9" width="8.3" height="58.4" fill="url(#gO)" stroke="url(#gOs)" stroke-width="1"/><rect x="786.2" y="291.3" width="8.3" height="61.8" fill="url(#gR)" stroke="url(#gRs)" stroke-width="1"/><rect x="786.2" y="354.1" width="8.3" height="58.2" fill="url(#gB)" stroke="url(#gBs)" stroke-width="1"/><rect x="786.2" y="413.3" width="8.3" height="57.0" fill="url(#gG)" stroke="url(#gGs)" stroke-width="1"/><rect x="802.5" y="228.5" width="8.3" height="59.5" fill="url(#gO)" stroke="url(#gOs)" stroke-width="1"/><rect x="802.5" y="289.0" width="8.3" height="62.1" fill="url(#gR)" stroke="url(#gRs)" stroke-width="1"/><rect x="802.5" y="352.1" width="8.3" height="59.4" fill="url(#gB)" stroke="url(#gBs)" stroke-width="1"/><rect x="802.5" y="412.5" width="8.3" height="57.8" fill="url(#gG)" stroke="url(#gGs)" stroke-width="1"/><rect x="818.8" y="217.5" width="8.3" height="62.5" fill="url(#gO)" stroke="url(#gOs)" stroke-width="1"/><rect x="818.8" y="281.0" width="8.3" height="63.0" fill="url(#gR)" stroke="url(#gRs)" stroke-width="1"/><rect x="818.8" y="345.0" width="8.3" height="62.5" fill="url(#gB)" stroke="url(#gBs)" stroke-width="1"/><rect x="818.8" y="408.5" width="8.3" height="61.8" fill="url(#gG)" stroke="url(#gGs)" stroke-width="1"/><rect x="835.0" y="241.5" width="8.3" height="56.5" fill="url(#gO)" stroke="url(#gOs)" stroke-width="1"/><rect x="835.0" y="299.0" width="8.3" height="56.8" fill="url(#gR)" stroke="url(#gRs)" stroke-width="1"/><rect x="835.0" y="356.8" width="8.3" height="56.3" fill="url(#gB)" stroke="url(#gBs)" stroke-width="1"/><rect x="835.0" y="414.1" width="8.3" height="56.2" fill="url(#gG)" stroke="url(#gGs)" stroke-width="1"/><rect x="851.3" y="240.8" width="8.3" height="60.2" fill="url(#gO)" stroke="url(#gOs)" stroke-width="1"/><rect x="851.3" y="302.0" width="8.3" height="60.1" fill="url(#gR)" stroke="url(#gRs)" stroke-width="1"/><rect x="851.3" y="363.1" width="8.3" height="60.2" fill="url(#gB)" stroke="url(#gBs)" stroke-width="1"/><rect x="851.3" y="424.3" width="8.3" height="46.0" fill="url(#gG)" stroke="url(#gGs)" stroke-width="1"/><rect x="867.5" y="234.9" width="8.3" height="58.8" fill="url(#gO)" stroke="url(#gOs)" stroke-width="1"/><rect x="867.5" y="294.7" width="8.3" height="60.8" fill="url(#gR)" stroke="url(#gRs)" stroke-width="1"/><rect x="867.5" y="356.5" width="8.3" height="59.0" fill="url(#gB)" stroke="url(#gBs)" stroke-width="1"/><rect x="867.5" y="416.5" width="8.3" height="53.8" fill="url(#gG)" stroke="url(#gGs)" stroke-width="1"/><rect x="884.2" y="224.9" width="8.3" height="60.1" fill="url(#gO)" stroke="url(#gOs)" stroke-width="1"/><rect x="884.2" y="286.0" width="8.3" height="61.5" fill="url(#gR)" stroke="url(#gRs)" stroke-width="1"/><rect x="884.2" y="348.5" width="8.3" height="61.0" fill="url(#gB)" stroke="url(#gBs)" stroke-width="1"/><rect x="884.2" y="410.5" width="8.3" height="59.8" fill="url(#gG)" stroke="url(#gGs)" stroke-width="1"/><rect x="900.5" y="225.5" width="8.3" height="60.5" fill="url(#gO)" stroke="url(#gOs)" stroke-width="1"/><rect x="900.5" y="287.0" width="8.3" height="60.5" fill="url(#gR)" stroke="url(#gRs)" stroke-width="1"/><rect x="900.5" y="348.5" width="8.3" height="61.0" fill="url(#gB)" stroke="url(#gBs)" stroke-width="1"/><rect x="900.5" y="410.5" width="8.3" height="59.8" fill="url(#gG)" stroke="url(#gGs)" stroke-width="1"/><rect x="916" y="454.3" width="6" height="5" fill="#d42a2a"/><rect x="916" y="459.3" width="6" height="3.5" fill="#e07090"/><rect x="916" y="462.8" width="6" height="4" fill="#74c0ee"/><rect x="916" y="466.8" width="6" height="4" fill="#7c9a50"/></svg><div class="t" style="left:-148.20px;width:200px;text-align:right;top:486.19px;font-size:11.0px;color:#24292e">0</div><div class="t" style="left:-148.20px;width:200px;text-align:right;top:447.19px;font-size:11.0px;color:#24292e">1<span style="word-spacing:-0.8px"> </span>K</div><div class="t" style="left:-148.20px;width:200px;text-align:right;top:409.19px;font-size:11.0px;color:#24292e">2<span style="word-spacing:-0.8px"> </span>K</div><div class="t" style="left:-148.20px;width:200px;text-align:right;top:370.19px;font-size:11.0px;color:#24292e">3<span style="word-spacing:-0.8px"> </span>K</div><div class="t" style="left:-148.20px;width:200px;text-align:right;top:331.19px;font-size:11.0px;color:#24292e">4<span style="word-spacing:-0.8px"> </span>K</div><div class="t" style="left:-148.20px;width:200px;text-align:right;top:292.19px;font-size:11.0px;color:#24292e">5<span style="word-spacing:-0.8px"> </span>K</div><div class="t" style="left:-148.20px;width:200px;text-align:right;top:253.19px;font-size:11.0px;color:#24292e">6<span style="word-spacing:-0.8px"> </span>K</div><div class="t" style="left:-148.20px;width:200px;text-align:right;top:214.19px;font-size:11.0px;color:#24292e">7<span style="word-spacing:-0.8px"> </span>K</div><div class="t" style="left:-27.80px;width:200px;text-align:center;top:501.10px;font-size:11.1px;letter-spacing:0.3px;color:#24292e">05/28 12:00</div><div class="t" style="left:73.50px;width:200px;text-align:center;top:501.10px;font-size:11.1px;letter-spacing:0.3px;color:#24292e">05/28 18:00</div><div class="t" style="left:174.80px;width:200px;text-align:center;top:501.10px;font-size:11.1px;letter-spacing:0.3px;color:#24292e">05/29 00:00</div><div class="t" style="left:276.10px;width:200px;text-align:center;top:501.10px;font-size:11.1px;letter-spacing:0.3px;color:#24292e">05/29 06:00</div><div style="position:absolute;left:35px;top:520.6px;width:11.6px;height:3.8px;background:#73bcd8;border-radius:2px"></div><div class="t" style="left:54.00px;top:517.36px;font-size:10.8px;font-weight:400;color:#24292e;letter-spacing:0.12px">backend_01</div><div style="position:absolute;left:122.4px;top:520.6px;width:11.6px;height:3.8px;background:#1f60c4;border-radius:2px"></div><div class="t" style="left:141.20px;top:517.36px;font-size:10.8px;font-weight:400;color:#24292e;letter-spacing:0.12px">backend_02</div><div style="position:absolute;left:211.5px;top:520.6px;width:11.6px;height:3.8px;background:#1f2c6e;border-radius:2px"></div><div class="t" style="left:230.60px;top:517.36px;font-size:10.8px;font-weight:400;color:#24292e;letter-spacing:0.12px">backend_03</div><div style="position:absolute;left:301.5px;top:520.6px;width:11.6px;height:3.8px;background:#a050d0;border-radius:2px"></div><div class="t" style="left:320.60px;top:517.36px;font-size:10.8px;font-weight:400;color:#24292e;letter-spacing:0.12px">backend_04</div><div class="t" style="left:325.30px;width:200px;text-align:right;top:466.19px;font-size:11.0px;color:#24292e">0</div><div class="t" style="left:325.30px;width:200px;text-align:right;top:434.19px;font-size:11.0px;color:#24292e">50<span style="word-spacing:-0.8px"> </span>K</div><div class="t" style="left:325.30px;width:200px;text-align:right;top:403.19px;font-size:11.0px;color:#24292e">100<span style="word-spacing:-0.8px"> </span>K</div><div class="t" style="left:325.30px;width:200px;text-align:right;top:371.19px;font-size:11.0px;color:#24292e">150<span style="word-spacing:-0.8px"> </span>K</div><div class="t" style="left:325.30px;width:200px;text-align:right;top:340.19px;font-size:11.0px;color:#24292e">200<span style="word-spacing:-0.8px"> </span>K</div><div class="t" style="left:325.30px;width:200px;text-align:right;top:309.19px;font-size:11.0px;color:#24292e">250<span style="word-spacing:-0.8px"> </span>K</div><div class="t" style="left:325.30px;width:200px;text-align:right;top:277.19px;font-size:11.0px;color:#24292e">300<span style="word-spacing:-0.8px"> </span>K</div><div class="t" style="left:325.30px;width:200px;text-align:right;top:246.19px;font-size:11.0px;color:#24292e">350<span style="word-spacing:-0.8px"> </span>K</div><div class="t" style="left:325.30px;width:200px;text-align:right;top:214.19px;font-size:11.0px;color:#24292e">400<span style="word-spacing:-0.8px"> </span>K</div><div class="t" style="left:325.30px;width:200px;text-align:right;top:183.19px;font-size:11.0px;color:#24292e">450<span style="word-spacing:-0.8px"> </span>K</div><div class="t" style="left:445.50px;width:200px;text-align:center;top:480.10px;font-size:11.1px;letter-spacing:0.3px;color:#24292e">05/28 12:00</div><div class="t" style="left:543.50px;width:200px;text-align:center;top:480.10px;font-size:11.1px;letter-spacing:0.3px;color:#24292e">05/28 18:00</div><div class="t" style="left:641.50px;width:200px;text-align:center;top:480.10px;font-size:11.1px;letter-spacing:0.3px;color:#24292e">05/29 00:00</div><div class="t" style="left:739.40px;width:200px;text-align:center;top:480.10px;font-size:11.1px;letter-spacing:0.3px;color:#24292e">05/29 06:00</div><div style="position:absolute;left:495.5px;top:500.6px;width:11.6px;height:3.8px;background:#56a64b;border-radius:2px"></div><div class="t" style="left:514.30px;top:497.36px;font-size:10.8px;font-weight:400;color:#24292e;letter-spacing:0px">backend_01</div><div class="t" style="left:580.20px;top:497.27px;font-size:10.9px;font-weight:400;color:#24292e;letter-spacing:0px">Mean: 87.7 K</div><div style="position:absolute;left:655px;top:500.6px;width:11.6px;height:3.8px;background:#5794f2;border-radius:2px"></div><div class="t" style="left:673.80px;top:497.36px;font-size:10.8px;font-weight:400;color:#24292e;letter-spacing:0.22px">backend_02</div><div class="t" style="left:742.20px;top:497.27px;font-size:10.9px;font-weight:400;color:#24292e;letter-spacing:0.22px">Mean: 91.9 K</div><div style="position:absolute;left:495.5px;top:520.6px;width:11.6px;height:3.8px;background:#e0483e;border-radius:2px"></div><div class="t" style="left:514.30px;top:517.36px;font-size:10.8px;font-weight:400;color:#24292e;letter-spacing:0.22px">backend_03</div><div class="t" style="left:582.80px;top:517.27px;font-size:10.9px;font-weight:400;color:#24292e;letter-spacing:0.22px">Mean: 94.0 K</div><div style="position:absolute;left:660px;top:520.6px;width:11.6px;height:3.8px;background:#f06a24;border-radius:2px"></div><div class="t" style="left:678.60px;top:517.36px;font-size:10.8px;font-weight:400;color:#24292e;letter-spacing:0.12px">backend_04</div><div class="t" style="left:747.20px;top:517.27px;font-size:10.9px;font-weight:400;color:#24292e;letter-spacing:0.12px">Mean: 93.1 K</div><div style="position:absolute;left:961px;top:2px;width:1px;height:553px;background:#b7c6dc"></div><svg style="position:absolute;left:956px;top:256px" width="11" height="50" viewBox="0 0 11 50">
<rect x="1.5" y="1" width="8" height="47.5" rx="1.5" fill="#fff" stroke="#a9bcd6" stroke-width="1"/>
<path d="M7 9 L3.6 15 L7 21 Z" fill="#9fb3cf"/><path d="M4 28 L7.4 34 L4 40 Z" fill="#9fb3cf"/></svg><div class="t" style="left:967.50px;top:10.37px;font-size:9.6px;font-weight:400;color:#333;">Name</div><div style="position:absolute;left:1108px;top:8px;width:1px;height:14px;background:#dcdcdc"></div><div class="t" style="left:1110.80px;top:10.20px;font-size:9.8px;font-weight:400;color:#333;letter-spacing:0.35px">Description</div><div style="position:absolute;left:966px;top:27px;width:236px;height:1px;background:#e6e6e6"></div><div style="position:absolute;left:966px;top:59px;width:236px;height:16px;background:#2a5fd6"></div><div class="t" style="left:1000.50px;top:29.77px;font-size:11.5px;font-weight:400;color:#1a1a1a;">Tableau</div><div class="t" style="left:1110.80px;top:29.77px;font-size:11.5px;font-weight:400;color:#1a1a1a;letter-spacing:0.2px">Tableau charts</div><div class="t" style="left:1000.30px;top:45.77px;font-size:11.5px;font-weight:400;color:#1a1a1a;">Web</div><div class="t" style="left:1110.80px;top:45.77px;font-size:11.5px;font-weight:400;color:#1a1a1a;letter-spacing:0.18px">Web dashboards</div><div class="t" style="left:1011.50px;top:61.32px;font-size:10.85px;font-weight:700;color:#fff;">grafana</div><div class="t" style="left:1110.80px;top:61.32px;font-size:10.85px;font-weight:700;color:#fff;">grafana</div><svg style="position:absolute;left:964px;top:26px" width="50" height="50" viewBox="0 0 50 50">
<path d="M7 6.5 L10.5 9.5 L7 12.5" fill="none" stroke="#555" stroke-width="1.1"/>
<path d="M5.5 23 L9 26.5 L12.5 23" fill="none" stroke="#555" stroke-width="1.1"/>
<g transform="translate(26.8,8.6)">
<path d="M0 -3.2 V3.2 M-3.2 0 H3.2" stroke="#e99a68" stroke-width="1.5"/>
<path d="M-3.6 -4.8 V-1.6 M-5.2 -3.2 H-2" stroke="#eb9a3c" stroke-width="1.1"/>
<path d="M3.6 -4.8 V-1.6 M2 -3.2 H5.2" stroke="#5f9fae" stroke-width="1.1"/>
<path d="M-3.6 1.6 V4.8 M-5.2 3.2 H-2" stroke="#c9354e" stroke-width="1.1"/>
<path d="M3.6 1.6 V4.8 M2 3.2 H5.2" stroke="#2f4c86" stroke-width="1.1"/>
<path d="M0 -6.2 V-4.4 M-0.9 -5.3 H0.9" stroke="#7aa3b0" stroke-width="0.9"/>
<path d="M0 6.2 V4.4 M-0.9 5.3 H0.9" stroke="#6e64a6" stroke-width="0.9"/>
<path d="M-6.6 0 H-4.8 M-5.7 -0.9 V0.9" stroke="#6a98a8" stroke-width="0.9"/>
<path d="M6.4 0 H4.6 M5.5 -0.9 V0.9" stroke="#6160a0" stroke-width="0.9"/>
</g>
<g transform="translate(20.4,19.4)">
<g fill="#1f72cc">
<rect x="0.9" y="0.9" width="11.2" height="1.8"/>
<rect x="0.9" y="0.9" width="1.3" height="9.6" rx="0.4"/>
<rect x="0.9" y="9.2" width="6.2" height="1.3" rx="0.4"/>
<rect x="10.8" y="0.9" width="1.3" height="4.6"/>
</g>
<circle cx="10.1" cy="9.2" r="4.2" fill="#fff"/>
<circle cx="10.1" cy="9.2" r="3.3" fill="none" stroke="#9cc2ea" stroke-width="0.9"/>
<path d="M7.1 8.6 A3.3 3.3 0 0 1 12.3 6.6 L11.2 7.9 Q9.8 7.6 8.8 9.4 Z" fill="#1f72cc"/>
<path d="M9.4 10.1 Q10.8 10.4 11.6 9.2 L13.2 10.3 A3.3 3.3 0 0 1 10.4 12.5 Z" fill="#1f72cc"/>
</g>
<g transform="translate(32.5,35)">
<rect x="0.6" y="0.6" width="11" height="10" rx="0.5" fill="none" stroke="#6d9bd8" stroke-width="1.1"/>
<path d="M4.6 4.3 H9.2 M2.6 6.9 H6.6" stroke="#6d9bd8" stroke-width="1.1"/>
</g>
</svg>
</body></html>
